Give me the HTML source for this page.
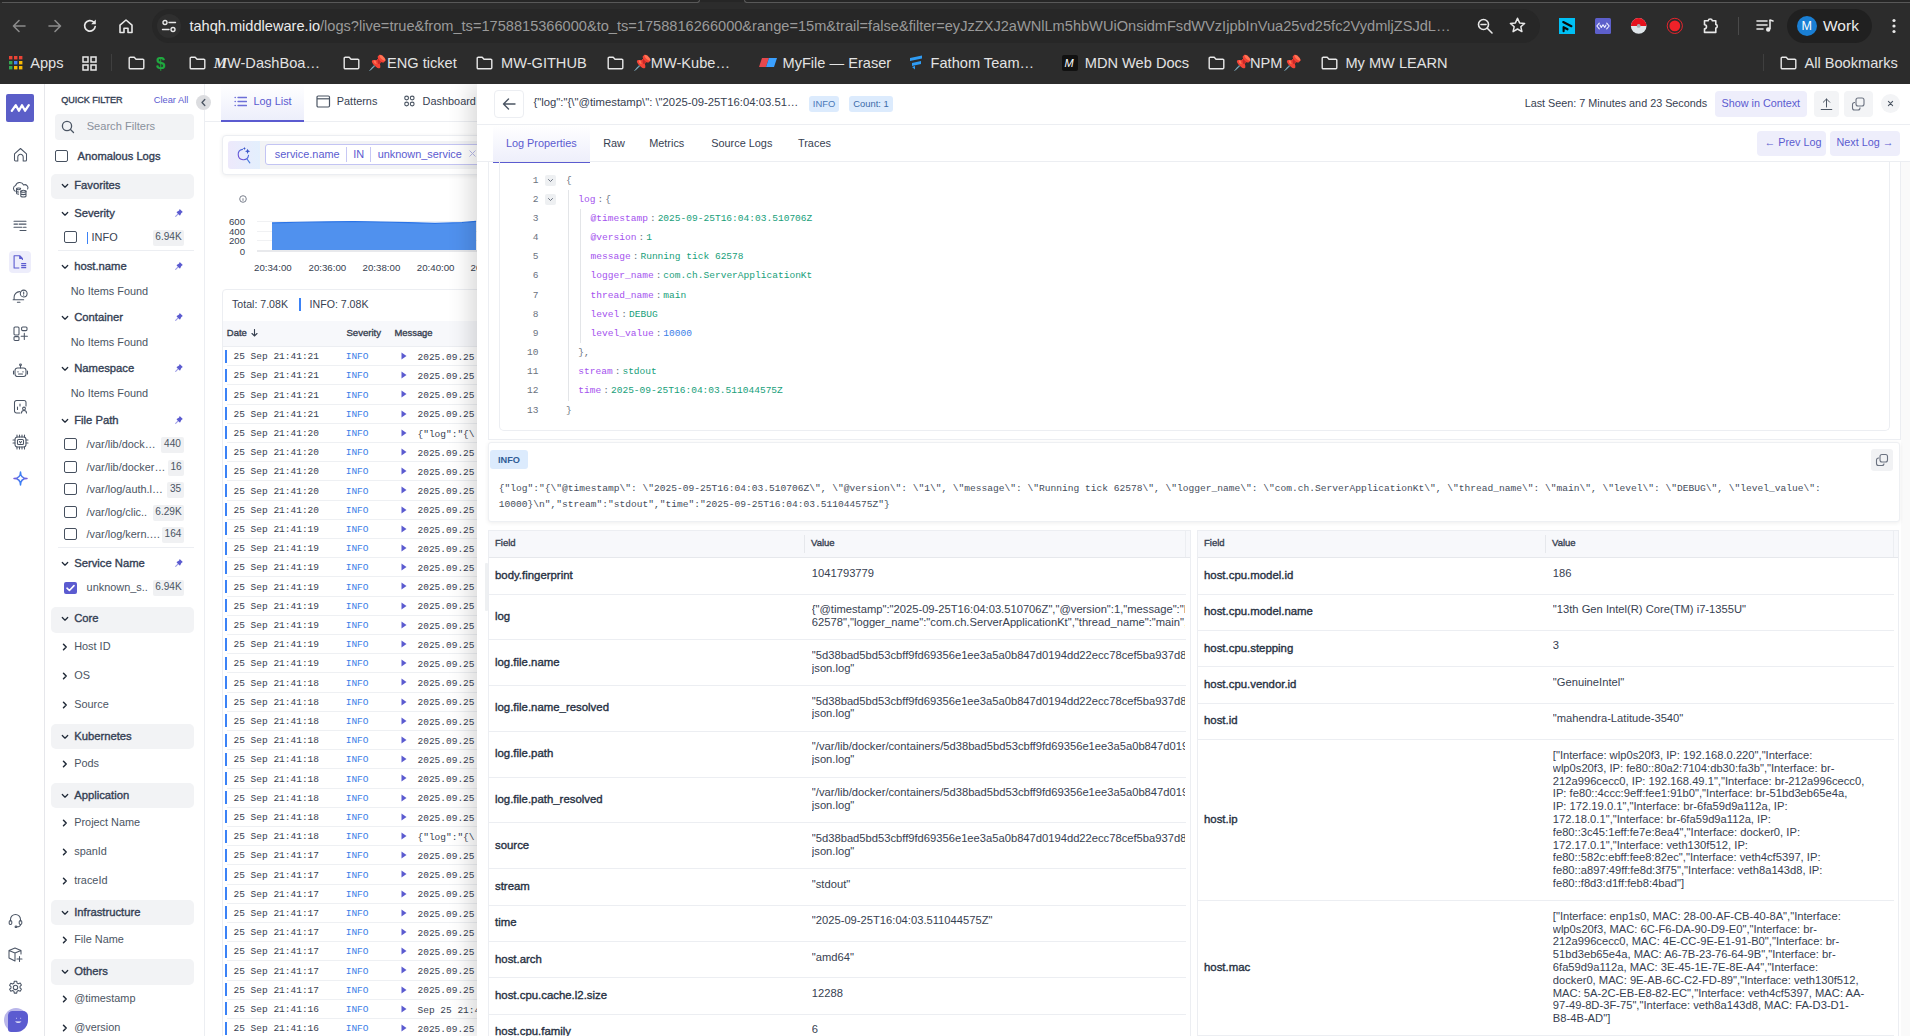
<!DOCTYPE html><html><head><meta charset="utf-8"><style>*{margin:0;padding:0}html,body{width:1910px;height:1036px;overflow:hidden;background:#fff}
body{position:relative;font-family:'Liberation Sans',sans-serif}
.a{position:absolute}.t{position:absolute;white-space:pre;line-height:1}</style></head><body><div class="a" style="left:0px;top:84px;width:44px;height:952px;background:#ffffff;"></div>
<div class="a" style="left:44px;top:84px;width:1px;height:952px;background:#e6e7eb;"></div>
<div class="a" style="left:6px;top:94px;width:28px;height:28px;background:#5b5ec8;border-radius:2px;"></div>
<svg class="a" style="left:8px;top:101px;" width="24" height="14" viewBox="0 0 24 14" fill="none"><path d="M3.8 9.9L7.8 4.2 10.9 9.7 14 4.2 17.1 9.7 20.8 4.2" stroke="#fff" stroke-width="2.3" stroke-linecap="round" stroke-linejoin="round"/></svg>
<svg class="a" style="left:13px;top:147px;" width="15" height="15" viewBox="0 0 15 15" fill="none"><path d="M1.5 6.8L7.5 1.5l6 5.3v6.2a1 1 0 0 1-1 1H10.2V10a2.7 2.7 0 0 0-5.4 0v4H2.5a1 1 0 0 1-1-1z" stroke="#4b5565" stroke-width="1.05" stroke-linecap="round" stroke-linejoin="round"/></svg>
<svg class="a" style="left:12px;top:182px;" width="17" height="16" viewBox="0 0 17 16" fill="none"><path d="M3.2 9.2A3 3 0 0 1 3.6 3.6 4.3 4.3 0 0 1 11.6 3 3 3 0 0 1 15.6 7" stroke="#4b5565" stroke-width="1.05" stroke-linecap="round" stroke-linejoin="round"/><ellipse cx="6.6" cy="6.8" rx="2.1" ry=".9" stroke="#4b5565" stroke-width="1.05" stroke-linecap="round" stroke-linejoin="round"/><path d="M4.5 6.8v4.4c0 .5.9.9 2.1.9M4.5 9c0 .5.9.9 2.1.9" stroke="#4b5565" stroke-width="1.05" stroke-linecap="round" stroke-linejoin="round"/><ellipse cx="11.4" cy="9.2" rx="2.6" ry="1" stroke="#4b5565" stroke-width="1.05" stroke-linecap="round" stroke-linejoin="round"/><path d="M8.8 9.2v4.8c0 .6 1.2 1 2.6 1s2.6-.4 2.6-1V9.2M8.8 11.6c0 .6 1.2 1 2.6 1s2.6-.4 2.6-1" stroke="#4b5565" stroke-width="1.05" stroke-linecap="round" stroke-linejoin="round"/></svg>
<svg class="a" style="left:12px;top:219px;" width="17" height="14" viewBox="0 0 17 14" fill="none"><path d="M2 2.3h12M2 5.1h3.5M7 5.1h7M2 8.3h8M11.5 8.3h2.6M8 11.4h6" stroke="#4b5565" stroke-width="1.05" stroke-linecap="round" stroke-linejoin="round"/></svg>
<div class="a" style="left:9px;top:251px;width:22px;height:22px;background:#ededfb;border-radius:4px;"></div>
<svg class="a" style="left:13px;top:255px;" width="14" height="14" viewBox="0 0 14 14" fill="none"><path d="M6.3 13H1.1V0.7h5.6l2.7 2.8v1.6M6.7 0.7v2.8h2.7" stroke="#5b5bd0" stroke-width="1.1" stroke-linejoin="round"/><path d="M8.2 8.6h5M8.2 10.6h5M8.2 12.6h5" stroke="#5b5bd0" stroke-width="1.1"/></svg>
<svg class="a" style="left:12px;top:288px;" width="17" height="17" viewBox="0 0 17 17" fill="none"><path d="M1.1 11.8h10.6M2.1 11.8V9.3A5.5 5.5 0 0 1 7.6 3.6" stroke="#4b5565" stroke-width="1.05" stroke-linecap="round" stroke-linejoin="round"/><circle cx="11.7" cy="5.5" r="3.4" stroke="#4b5565" stroke-width="1.05" stroke-linecap="round" stroke-linejoin="round"/><path d="M11.7 4v2M11.7 7.2v.1M5.4 14.3h2.6" stroke="#4b5565" stroke-width="1.05" stroke-linecap="round" stroke-linejoin="round"/></svg>
<svg class="a" style="left:13px;top:326px;" width="15" height="16" viewBox="0 0 15 16" fill="none"><rect x="1" y="1" width="5" height="8" rx="1" stroke="#4b5565" stroke-width="1.05" stroke-linecap="round" stroke-linejoin="round"/><rect x="1" y="10.6" width="5" height="3.8" rx="1" stroke="#4b5565" stroke-width="1.05" stroke-linecap="round" stroke-linejoin="round"/><rect x="8.6" y="1" width="5.4" height="3.6" rx="1" stroke="#4b5565" stroke-width="1.05" stroke-linecap="round" stroke-linejoin="round"/><path d="M11.3 7.2v6.2M8.2 10.3h6.2" stroke="#4b5565" stroke-width="1.05" stroke-linecap="round" stroke-linejoin="round"/></svg>
<svg class="a" style="left:12px;top:363px;" width="17" height="15" viewBox="0 0 17 15" fill="none"><rect x="3" y="5" width="11" height="8.5" rx="2.5" stroke="#4b5565" stroke-width="1.05" stroke-linecap="round" stroke-linejoin="round"/><path d="M8.5 5V2.5M1.5 8v3M15.5 8v3M6 8.5v.5M11 8.5v.5M6.5 11h4" stroke="#4b5565" stroke-width="1.05" stroke-linecap="round" stroke-linejoin="round"/><circle cx="8.5" cy="1.8" r=".9" stroke="#4b5565" stroke-width="1.05" stroke-linecap="round" stroke-linejoin="round"/></svg>
<svg class="a" style="left:13px;top:399px;" width="15" height="15" viewBox="0 0 15 15" fill="none"><path d="M7 14H3.5a2 2 0 0 1-2-2V3.5a2 2 0 0 1 2-2h7.5a2 2 0 0 1 2 2V7" stroke="#4b5565" stroke-width="1.05" stroke-linecap="round" stroke-linejoin="round"/><path d="M4.5 8v2.5M7 5v2" stroke="#4b5565" stroke-width="1.05" stroke-linecap="round" stroke-linejoin="round"/><circle cx="11" cy="9.5" r="1.4" stroke="#4b5565" stroke-width="1.05" stroke-linecap="round" stroke-linejoin="round"/><path d="M8.5 14a2.5 2.5 0 0 1 5 0" stroke="#4b5565" stroke-width="1.05" stroke-linecap="round" stroke-linejoin="round"/></svg>
<svg class="a" style="left:12px;top:434px;" width="17" height="16" viewBox="0 0 17 16" fill="none"><rect x="3" y="3" width="11" height="10" rx="2.5" stroke="#4b5565" stroke-width="1.05" stroke-linecap="round" stroke-linejoin="round"/><rect x="5.5" y="5.5" width="6" height="5" rx="1" stroke="#4b5565" stroke-width="1.05" stroke-linecap="round" stroke-linejoin="round"/><path d="M5 1v2M7.5 1v2M10 1v2M12.5 1v2M5 13v2M7.5 13v2M10 13v2M12.5 13v2M1 6h2M1 9h2M14 6h2M14 9h2M7.5 7.5l1 1.5 1-1.5" stroke="#4b5565" stroke-width="1.05" stroke-linecap="round" stroke-linejoin="round"/></svg>
<svg class="a" style="left:13px;top:471px;" width="15" height="15" viewBox="0 0 15 15" fill="none"><defs><linearGradient id="sg" x1="0" y1="0" x2="1" y2="0"><stop offset="0" stop-color="#7a5bd8"/><stop offset=".5" stop-color="#3b82f6"/><stop offset="1" stop-color="#7a5bd8"/></linearGradient></defs><path d="M7.5 1C7.5 5 5 7.5 1 7.5 5 7.5 7.5 10 7.5 14 7.5 10 10 7.5 14 7.5 10 7.5 7.5 5 7.5 1z" stroke="url(#sg)" stroke-width="1.5" stroke-linejoin="round"/></svg>
<svg class="a" style="left:8px;top:912px;" width="15" height="16" viewBox="0 0 15 16" fill="none"><path d="M2.5 9V7.5a5 5 0 0 1 10 0V9" stroke="#4b5565" stroke-width="1.05" stroke-linecap="round" stroke-linejoin="round"/><rect x="1.2" y="8.5" width="2.6" height="4" rx="1.3" stroke="#4b5565" stroke-width="1.05" stroke-linecap="round" stroke-linejoin="round"/><rect x="11.2" y="8.5" width="2.6" height="4" rx="1.3" stroke="#4b5565" stroke-width="1.05" stroke-linecap="round" stroke-linejoin="round"/><path d="M12.5 12.5c0 1.5-1.5 2.3-3.5 2.3" stroke="#4b5565" stroke-width="1.05" stroke-linecap="round" stroke-linejoin="round"/><circle cx="8" cy="14.8" r=".9" stroke="#4b5565" stroke-width="1.05" stroke-linecap="round" stroke-linejoin="round"/></svg>
<svg class="a" style="left:8px;top:947px;" width="15" height="15" viewBox="0 0 15 15" fill="none"><path d="M7 1L13 3.5V7M7 1L1 3.5v7.5l6 3M1 3.5L7 6l6-2.5M7 6v8" stroke="#4b5565" stroke-width="1.05" stroke-linecap="round" stroke-linejoin="round"/><path d="M11.5 9.5v5M9 12h5" stroke="#4b5565" stroke-width="1.05" stroke-linecap="round" stroke-linejoin="round"/></svg>
<svg class="a" style="left:8px;top:980px;" width="15" height="15" viewBox="0 0 15 15" fill="none"><path d="M6.3 1.2h2.4l.4 1.9 1.3.7 1.8-.7 1.2 2-1.4 1.3v1.5l1.4 1.3-1.2 2-1.8-.7-1.3.7-.4 1.9H6.3l-.4-1.9-1.3-.7-1.8.7-1.2-2L3 8.1V6.6L1.6 5.3l1.2-2 1.8.7 1.3-.7z" stroke="#4b5565" stroke-width="1.05" stroke-linecap="round" stroke-linejoin="round"/><circle cx="7.5" cy="7.4" r="2.2" stroke="#4b5565" stroke-width="1.05" stroke-linecap="round" stroke-linejoin="round"/></svg>
<div class="a" style="left:4px;top:1008px;width:24px;height:24px;background:#b9b6ea;border-radius:12px;"></div>
<svg class="a" style="left:4px;top:1008px;" width="24" height="24" viewBox="0 0 24 24" fill="none"><path d="M4 7.5A4.5 4.5 0 0 1 8.5 3H19a5 5 0 0 1 5 5v4a12 12 0 0 1-12 12H7a3 3 0 0 1-3-3z" fill="#5b5bd0"/><path d="M11 13.5c1.5 1.8 5 1.8 6.5 0z" fill="#fff"/><path d="M12 10.3h.8M16.3 10.3h.8" stroke="#dcdaf7" stroke-width="1"/></svg>
<div class="a" style="left:45px;top:84px;width:159px;height:952px;background:#ffffff;"></div>
<div class="a" style="left:204px;top:84px;width:1px;height:952px;background:#eceef2;"></div>
<div class="t" style="left:61.20px;top:95.86px;font-size:9.1px;-webkit-text-stroke:0.35px currentColor;color:#344054;letter-spacing:-0.05px;">QUICK FILTER</div>
<div class="t" style="left:153.70px;top:95.69px;font-size:9.3px;color:#5b5bd0;">Clear All</div>
<div class="a" style="left:55px;top:114px;width:139px;height:26px;background:#f2f3f5;border-radius:4px;"></div>
<svg class="a" style="left:61px;top:120px;" width="14" height="14" viewBox="0 0 14 14" fill="none"><circle cx="6" cy="6" r="4.6" stroke="#4b5563" stroke-width="1.3"/><path d="M9.5 9.5l3 3" stroke="#4b5563" stroke-width="1.3" stroke-linecap="round"/></svg>
<div class="t" style="left:86.70px;top:120.87px;font-size:11.1px;color:#8a919c;">Search Filters</div>
<div class="a" style="left:55px;top:150px;width:13px;height:12px;border:1.5px solid #46505f;border-radius:2px;box-sizing:border-box;"></div>
<div class="t" style="left:77.60px;top:150.82px;font-size:11.15px;-webkit-text-stroke:0.35px currentColor;color:#344054;">Anomalous Logs</div>
<div class="a" style="left:51px;top:174px;width:143px;height:25px;background:#f2f3f5;border-radius:5px;"></div>
<svg class="a" style="left:61px;top:182.5px;" width="8" height="6" viewBox="0 0 8 6" fill="none"><path d="M1.3 1.5l2.7 2.7 2.7-2.7" stroke="#1f2937" stroke-width="1.25" stroke-linecap="round" stroke-linejoin="round"/></svg>
<div class="t" style="left:74.20px;top:179.64px;font-size:11.25px;-webkit-text-stroke:0.35px currentColor;color:#344054;">Favorites</div>
<svg class="a" style="left:61px;top:210.8px;" width="8" height="6" viewBox="0 0 8 6" fill="none"><path d="M1.3 1.5l2.7 2.7 2.7-2.7" stroke="#1f2937" stroke-width="1.25" stroke-linecap="round" stroke-linejoin="round"/></svg>
<div class="t" style="left:74.20px;top:207.94px;font-size:11.25px;-webkit-text-stroke:0.35px currentColor;color:#344054;">Severity</div>
<svg class="a" style="left:175px;top:207.9px;" width="9" height="9" viewBox="0 0 9 9" fill="none"><path d="M4.7 1L7.8 4.1 6.4 4.9 5.1 7.4 4.3 7.3 1.8 4.8 1.7 4 4.1 2.6z" fill="#5b5bd0"/><path d="M2.7 6.3L.7 8.3" stroke="#9d9de6" stroke-width="1.1" stroke-linecap="round"/></svg>
<div class="a" style="left:64px;top:231px;width:13px;height:12px;border:1.5px solid #46505f;border-radius:2px;box-sizing:border-box;"></div>
<div class="a" style="left:87px;top:231.5px;width:1.2px;height:12px;background:#3b82f6;"></div>
<div class="t" style="left:91.60px;top:231.54px;font-size:10.9px;color:#374151;">INFO</div>
<div class="a" style="left:153px;top:230px;width:31px;height:16px;background:#f0f1f3;border-radius:2px;"></div>
<div class="t" style="left:153px;top:230.80px;width:31px;height:11px;line-height:11px;text-align:center;font-size:10.1px;color:#4b5563">6.94K</div>
<div class="a" style="left:58px;top:250px;width:136px;height:1px;background:#eceef2;"></div>
<svg class="a" style="left:61px;top:263.5px;" width="8" height="6" viewBox="0 0 8 6" fill="none"><path d="M1.3 1.5l2.7 2.7 2.7-2.7" stroke="#1f2937" stroke-width="1.25" stroke-linecap="round" stroke-linejoin="round"/></svg>
<div class="t" style="left:74.20px;top:260.64px;font-size:11.25px;-webkit-text-stroke:0.35px currentColor;color:#344054;">host.name</div>
<svg class="a" style="left:175px;top:260.6px;" width="9" height="9" viewBox="0 0 9 9" fill="none"><path d="M4.7 1L7.8 4.1 6.4 4.9 5.1 7.4 4.3 7.3 1.8 4.8 1.7 4 4.1 2.6z" fill="#5b5bd0"/><path d="M2.7 6.3L.7 8.3" stroke="#9d9de6" stroke-width="1.1" stroke-linecap="round"/></svg>
<div class="t" style="left:70.70px;top:285.84px;font-size:10.9px;color:#4b5563;">No Items Found</div>
<svg class="a" style="left:61px;top:314.5px;" width="8" height="6" viewBox="0 0 8 6" fill="none"><path d="M1.3 1.5l2.7 2.7 2.7-2.7" stroke="#1f2937" stroke-width="1.25" stroke-linecap="round" stroke-linejoin="round"/></svg>
<div class="t" style="left:74.20px;top:311.64px;font-size:11.25px;-webkit-text-stroke:0.35px currentColor;color:#344054;">Container</div>
<svg class="a" style="left:175px;top:311.6px;" width="9" height="9" viewBox="0 0 9 9" fill="none"><path d="M4.7 1L7.8 4.1 6.4 4.9 5.1 7.4 4.3 7.3 1.8 4.8 1.7 4 4.1 2.6z" fill="#5b5bd0"/><path d="M2.7 6.3L.7 8.3" stroke="#9d9de6" stroke-width="1.1" stroke-linecap="round"/></svg>
<div class="t" style="left:70.70px;top:336.94px;font-size:10.9px;color:#4b5563;">No Items Found</div>
<svg class="a" style="left:61px;top:366.1px;" width="8" height="6" viewBox="0 0 8 6" fill="none"><path d="M1.3 1.5l2.7 2.7 2.7-2.7" stroke="#1f2937" stroke-width="1.25" stroke-linecap="round" stroke-linejoin="round"/></svg>
<div class="t" style="left:74.20px;top:363.24px;font-size:11.25px;-webkit-text-stroke:0.35px currentColor;color:#344054;">Namespace</div>
<svg class="a" style="left:175px;top:363.20000000000005px;" width="9" height="9" viewBox="0 0 9 9" fill="none"><path d="M4.7 1L7.8 4.1 6.4 4.9 5.1 7.4 4.3 7.3 1.8 4.8 1.7 4 4.1 2.6z" fill="#5b5bd0"/><path d="M2.7 6.3L.7 8.3" stroke="#9d9de6" stroke-width="1.1" stroke-linecap="round"/></svg>
<div class="t" style="left:70.70px;top:387.94px;font-size:10.9px;color:#4b5563;">No Items Found</div>
<svg class="a" style="left:61px;top:417.6px;" width="8" height="6" viewBox="0 0 8 6" fill="none"><path d="M1.3 1.5l2.7 2.7 2.7-2.7" stroke="#1f2937" stroke-width="1.25" stroke-linecap="round" stroke-linejoin="round"/></svg>
<div class="t" style="left:74.20px;top:414.74px;font-size:11.25px;-webkit-text-stroke:0.35px currentColor;color:#344054;">File Path</div>
<svg class="a" style="left:175px;top:414.70000000000005px;" width="9" height="9" viewBox="0 0 9 9" fill="none"><path d="M4.7 1L7.8 4.1 6.4 4.9 5.1 7.4 4.3 7.3 1.8 4.8 1.7 4 4.1 2.6z" fill="#5b5bd0"/><path d="M2.7 6.3L.7 8.3" stroke="#9d9de6" stroke-width="1.1" stroke-linecap="round"/></svg>
<div class="a" style="left:64px;top:438px;width:13px;height:12px;border:1.5px solid #46505f;border-radius:2px;box-sizing:border-box;"></div>
<div class="t" style="left:86.60px;top:439.13px;font-size:10.9px;color:#4b5563;">/var/lib/dock…</div>
<div class="a" style="left:161px;top:437px;width:23px;height:16px;background:#f0f1f3;border-radius:2px;"></div>
<div class="t" style="left:161px;top:437.80px;width:23px;height:11px;line-height:11px;text-align:center;font-size:10.1px;color:#4b5563">440</div>
<div class="a" style="left:64px;top:461px;width:13px;height:12px;border:1.5px solid #46505f;border-radius:2px;box-sizing:border-box;"></div>
<div class="t" style="left:86.60px;top:461.69px;font-size:10.9px;color:#4b5563;">/var/lib/docker…</div>
<div class="a" style="left:168px;top:460px;width:16px;height:16px;background:#f0f1f3;border-radius:2px;"></div>
<div class="t" style="left:168px;top:460.80px;width:16px;height:11px;line-height:11px;text-align:center;font-size:10.1px;color:#4b5563">16</div>
<div class="a" style="left:64px;top:483px;width:13px;height:12px;border:1.5px solid #46505f;border-radius:2px;box-sizing:border-box;"></div>
<div class="t" style="left:86.60px;top:484.24px;font-size:10.9px;color:#4b5563;">/var/log/auth.l…</div>
<div class="a" style="left:167px;top:482px;width:17px;height:16px;background:#f0f1f3;border-radius:2px;"></div>
<div class="t" style="left:167px;top:482.80px;width:17px;height:11px;line-height:11px;text-align:center;font-size:10.1px;color:#4b5563">35</div>
<div class="a" style="left:64px;top:506px;width:13px;height:12px;border:1.5px solid #46505f;border-radius:2px;box-sizing:border-box;"></div>
<div class="t" style="left:86.60px;top:506.78px;font-size:10.9px;color:#4b5563;">/var/log/clic..</div>
<div class="a" style="left:153px;top:505px;width:31px;height:16px;background:#f0f1f3;border-radius:2px;"></div>
<div class="t" style="left:153px;top:505.80px;width:31px;height:11px;line-height:11px;text-align:center;font-size:10.1px;color:#4b5563">6.29K</div>
<div class="a" style="left:64px;top:528px;width:13px;height:12px;border:1.5px solid #46505f;border-radius:2px;box-sizing:border-box;"></div>
<div class="t" style="left:86.60px;top:529.34px;font-size:10.9px;color:#4b5563;">/var/log/kern.…</div>
<div class="a" style="left:162px;top:527px;width:22px;height:16px;background:#f0f1f3;border-radius:2px;"></div>
<div class="t" style="left:162px;top:527.80px;width:22px;height:11px;line-height:11px;text-align:center;font-size:10.1px;color:#4b5563">164</div>
<div class="a" style="left:58px;top:547px;width:136px;height:1px;background:#eceef2;"></div>
<svg class="a" style="left:61px;top:560.7px;" width="8" height="6" viewBox="0 0 8 6" fill="none"><path d="M1.3 1.5l2.7 2.7 2.7-2.7" stroke="#1f2937" stroke-width="1.25" stroke-linecap="round" stroke-linejoin="round"/></svg>
<div class="t" style="left:74.20px;top:557.84px;font-size:11.25px;-webkit-text-stroke:0.35px currentColor;color:#344054;">Service Name</div>
<svg class="a" style="left:175px;top:557.8000000000001px;" width="9" height="9" viewBox="0 0 9 9" fill="none"><path d="M4.7 1L7.8 4.1 6.4 4.9 5.1 7.4 4.3 7.3 1.8 4.8 1.7 4 4.1 2.6z" fill="#5b5bd0"/><path d="M2.7 6.3L.7 8.3" stroke="#9d9de6" stroke-width="1.1" stroke-linecap="round"/></svg>
<div class="a" style="left:64px;top:582px;width:13px;height:12px;background:#5b5bd0;border-radius:2px;"></div>
<svg class="a" style="left:64px;top:582px;" width="13" height="12" viewBox="0 0 13 12" fill="none"><path d="M3 6.2l2.4 2.3L10 3.6" stroke="#fff" stroke-width="1.6" stroke-linecap="round" stroke-linejoin="round"/></svg>
<div class="t" style="left:86.60px;top:582.13px;font-size:10.9px;color:#4b5563;">unknown_s..</div>
<div class="a" style="left:153px;top:580px;width:31px;height:16px;background:#f0f1f3;border-radius:2px;"></div>
<div class="t" style="left:153px;top:580.80px;width:31px;height:11px;line-height:11px;text-align:center;font-size:10.1px;color:#4b5563">6.94K</div>
<div class="a" style="left:51px;top:607px;width:143px;height:26px;background:#f2f3f5;border-radius:5px;"></div>
<svg class="a" style="left:61px;top:616.3px;" width="8" height="6" viewBox="0 0 8 6" fill="none"><path d="M1.3 1.5l2.7 2.7 2.7-2.7" stroke="#1f2937" stroke-width="1.25" stroke-linecap="round" stroke-linejoin="round"/></svg>
<div class="t" style="left:74.20px;top:613.44px;font-size:11.25px;-webkit-text-stroke:0.35px currentColor;color:#344054;">Core</div>
<svg class="a" style="left:62px;top:643px;" width="6" height="8" viewBox="0 0 6 8" fill="none"><path d="M1.5 1.3l2.7 2.7-2.7 2.7" stroke="#1f2937" stroke-width="1.5" stroke-linecap="round" stroke-linejoin="round"/></svg>
<div class="t" style="left:74.20px;top:640.74px;font-size:10.9px;color:#4b5563;">Host ID</div>
<svg class="a" style="left:62px;top:672px;" width="6" height="8" viewBox="0 0 6 8" fill="none"><path d="M1.5 1.3l2.7 2.7-2.7 2.7" stroke="#1f2937" stroke-width="1.5" stroke-linecap="round" stroke-linejoin="round"/></svg>
<div class="t" style="left:74.20px;top:669.74px;font-size:10.9px;color:#4b5563;">OS</div>
<svg class="a" style="left:62px;top:701px;" width="6" height="8" viewBox="0 0 6 8" fill="none"><path d="M1.5 1.3l2.7 2.7-2.7 2.7" stroke="#1f2937" stroke-width="1.5" stroke-linecap="round" stroke-linejoin="round"/></svg>
<div class="t" style="left:74.20px;top:698.74px;font-size:10.9px;color:#4b5563;">Source</div>
<div class="a" style="left:51px;top:724px;width:143px;height:25px;background:#f2f3f5;border-radius:5px;"></div>
<svg class="a" style="left:61px;top:733.7px;" width="8" height="6" viewBox="0 0 8 6" fill="none"><path d="M1.3 1.5l2.7 2.7 2.7-2.7" stroke="#1f2937" stroke-width="1.25" stroke-linecap="round" stroke-linejoin="round"/></svg>
<div class="t" style="left:74.20px;top:730.84px;font-size:11.25px;-webkit-text-stroke:0.35px currentColor;color:#344054;">Kubernetes</div>
<svg class="a" style="left:62px;top:760px;" width="6" height="8" viewBox="0 0 6 8" fill="none"><path d="M1.5 1.3l2.7 2.7-2.7 2.7" stroke="#1f2937" stroke-width="1.5" stroke-linecap="round" stroke-linejoin="round"/></svg>
<div class="t" style="left:74.20px;top:757.74px;font-size:10.9px;color:#4b5563;">Pods</div>
<div class="a" style="left:51px;top:783px;width:143px;height:25px;background:#f2f3f5;border-radius:5px;"></div>
<svg class="a" style="left:61px;top:792.5px;" width="8" height="6" viewBox="0 0 8 6" fill="none"><path d="M1.3 1.5l2.7 2.7 2.7-2.7" stroke="#1f2937" stroke-width="1.25" stroke-linecap="round" stroke-linejoin="round"/></svg>
<div class="t" style="left:74.20px;top:789.64px;font-size:11.25px;-webkit-text-stroke:0.35px currentColor;color:#344054;">Application</div>
<svg class="a" style="left:62px;top:819.4px;" width="6" height="8" viewBox="0 0 6 8" fill="none"><path d="M1.5 1.3l2.7 2.7-2.7 2.7" stroke="#1f2937" stroke-width="1.5" stroke-linecap="round" stroke-linejoin="round"/></svg>
<div class="t" style="left:74.20px;top:817.13px;font-size:10.9px;color:#4b5563;">Project Name</div>
<svg class="a" style="left:62px;top:848.4px;" width="6" height="8" viewBox="0 0 6 8" fill="none"><path d="M1.5 1.3l2.7 2.7-2.7 2.7" stroke="#1f2937" stroke-width="1.5" stroke-linecap="round" stroke-linejoin="round"/></svg>
<div class="t" style="left:74.20px;top:846.13px;font-size:10.9px;color:#4b5563;">spanId</div>
<svg class="a" style="left:62px;top:877.4px;" width="6" height="8" viewBox="0 0 6 8" fill="none"><path d="M1.5 1.3l2.7 2.7-2.7 2.7" stroke="#1f2937" stroke-width="1.5" stroke-linecap="round" stroke-linejoin="round"/></svg>
<div class="t" style="left:74.20px;top:875.13px;font-size:10.9px;color:#4b5563;">traceId</div>
<div class="a" style="left:51px;top:900px;width:143px;height:25px;background:#f2f3f5;border-radius:5px;"></div>
<svg class="a" style="left:61px;top:909.5px;" width="8" height="6" viewBox="0 0 8 6" fill="none"><path d="M1.3 1.5l2.7 2.7 2.7-2.7" stroke="#1f2937" stroke-width="1.25" stroke-linecap="round" stroke-linejoin="round"/></svg>
<div class="t" style="left:74.20px;top:906.64px;font-size:11.25px;-webkit-text-stroke:0.35px currentColor;color:#344054;">Infrastructure</div>
<svg class="a" style="left:62px;top:936px;" width="6" height="8" viewBox="0 0 6 8" fill="none"><path d="M1.5 1.3l2.7 2.7-2.7 2.7" stroke="#1f2937" stroke-width="1.5" stroke-linecap="round" stroke-linejoin="round"/></svg>
<div class="t" style="left:74.20px;top:933.74px;font-size:10.9px;color:#4b5563;">File Name</div>
<div class="a" style="left:51px;top:959px;width:143px;height:26px;background:#f2f3f5;border-radius:5px;"></div>
<svg class="a" style="left:61px;top:968.7px;" width="8" height="6" viewBox="0 0 8 6" fill="none"><path d="M1.3 1.5l2.7 2.7 2.7-2.7" stroke="#1f2937" stroke-width="1.25" stroke-linecap="round" stroke-linejoin="round"/></svg>
<div class="t" style="left:74.20px;top:965.84px;font-size:11.25px;-webkit-text-stroke:0.35px currentColor;color:#344054;">Others</div>
<svg class="a" style="left:62px;top:995.4px;" width="6" height="8" viewBox="0 0 6 8" fill="none"><path d="M1.5 1.3l2.7 2.7-2.7 2.7" stroke="#1f2937" stroke-width="1.5" stroke-linecap="round" stroke-linejoin="round"/></svg>
<div class="t" style="left:74.20px;top:993.13px;font-size:10.9px;color:#4b5563;">@timestamp</div>
<svg class="a" style="left:62px;top:1024px;" width="6" height="8" viewBox="0 0 6 8" fill="none"><path d="M1.5 1.3l2.7 2.7-2.7 2.7" stroke="#1f2937" stroke-width="1.5" stroke-linecap="round" stroke-linejoin="round"/></svg>
<div class="t" style="left:74.20px;top:1021.74px;font-size:10.9px;color:#4b5563;">@version</div>
<div class="a" style="left:205px;top:84px;width:272px;height:952px;background:#ffffff;"></div>
<div class="a" style="left:221px;top:84px;width:83px;height:37px;background:linear-gradient(#ffffff,#eceefb);"></div>
<div class="a" style="left:205px;top:121px;width:272px;height:1px;background:#eceef2;"></div>
<div class="a" style="left:221px;top:120px;width:83px;height:2px;background:#5b5bd0;"></div>
<svg class="a" style="left:234px;top:96px;" width="13" height="11" viewBox="0 0 13 11" fill="none"><path d="M4 1.5h8.5M4 5.5h8.5M4 9.5h8.5" stroke="#6d6fd8" stroke-width="1.3" stroke-linecap="round"/><circle cx="1.2" cy="1.5" r=".8" fill="#6d6fd8"/><circle cx="1.2" cy="5.5" r=".8" fill="#6d6fd8"/><circle cx="1.2" cy="9.5" r=".8" fill="#6d6fd8"/></svg>
<div class="t" style="left:253.50px;top:96.03px;font-size:10.9px;color:#5b5bd0;">Log List</div>
<svg class="a" style="left:316px;top:95px;" width="15" height="13" viewBox="0 0 15 13" fill="none"><rect x="1" y="1" width="12.5" height="11" rx="1.2" stroke="#4b5563" stroke-width="1.2"/><path d="M1 3.8h12.5" stroke="#4b5563" stroke-width="1.2"/></svg>
<div class="t" style="left:336.80px;top:96.03px;font-size:10.9px;color:#374151;">Patterns</div>
<svg class="a" style="left:404px;top:95px;" width="11" height="12" viewBox="0 0 11 12" fill="none"><circle cx="2.6" cy="3" r="1.9" stroke="#4b5563" stroke-width="1.1"/><circle cx="8.2" cy="3" r="1.9" stroke="#4b5563" stroke-width="1.1"/><circle cx="2.6" cy="9" r="1.9" stroke="#4b5563" stroke-width="1.1"/><circle cx="8.2" cy="9" r="1.9" stroke="#4b5563" stroke-width="1.1"/></svg>
<div class="t" style="left:422.60px;top:96.03px;font-size:10.9px;color:#374151;">Dashboard</div>
<div class="a" style="left:222px;top:135px;width:300px;height:40px;background:#fff;border:1px solid #eceef2;border-radius:4px;box-shadow:0 1px 4px rgba(0,0,0,.07);box-sizing:border-box;"></div>
<div class="a" style="left:228px;top:141px;width:32px;height:28px;background:linear-gradient(90deg,#ede9fb,#e3effd);border-radius:3px 0 0 3px;"></div>
<svg class="a" style="left:236px;top:145px;" width="18" height="20" viewBox="0 0 18 20" fill="none"><defs><linearGradient id="ag" x1="0" y1="1" x2="1" y2="0"><stop offset="0" stop-color="#7a4bd3"/><stop offset="1" stop-color="#3577e0"/></linearGradient></defs><path d="M12.52 10.4A5.2 5.2 0 1 1 6.5 4.38" stroke="url(#ag)" stroke-width="1.1" stroke-linecap="round"/><path d="M11 14l2.8 3.8" stroke="#4a7bdc" stroke-width="1.2" stroke-linecap="round"/><path d="M11.6 3.7Q11.9 6 14.2 6.3 11.9 6.6 11.6 8.9 11.3 6.6 9 6.3 11.3 6 11.6 3.7z" fill="#3b55c8"/><path d="M8.4 1.9Q8.6 3.2 9.9 3.4 8.6 3.6 8.4 4.9 8.2 3.6 6.9 3.4 8.2 3.2 8.4 1.9z" fill="#3b55c8"/></svg>
<div class="a" style="left:260px;top:141px;width:217px;height:28px;background:#f2f3f5;"></div>
<div class="a" style="left:265px;top:144px;width:260px;height:21px;background:#fff;border:1px solid #c3c4f3;border-radius:3px;box-sizing:border-box;"></div>
<div class="t" style="left:274.80px;top:148.94px;font-size:10.9px;color:#5b5bd0;">service.name</div>
<div class="a" style="left:346px;top:147px;width:1px;height:15px;background:#c7c8f4;"></div>
<div class="t" style="left:353.20px;top:148.94px;font-size:10.9px;color:#5b5bd0;">IN</div>
<div class="a" style="left:370px;top:147px;width:1px;height:15px;background:#c7c8f4;"></div>
<div class="t" style="left:377.70px;top:148.94px;font-size:10.9px;color:#5b5bd0;">unknown_service</div>
<svg class="a" style="left:468px;top:149px;" width="9" height="9" viewBox="0 0 9 9" fill="none"><path d="M1.5 1.5l6 6M7.5 1.5l-6 6" stroke="#b9bbe9" stroke-width="1"/></svg>
<svg class="a" style="left:239px;top:195px;" width="8" height="8" viewBox="0 0 8 8" fill="none"><circle cx="4" cy="4" r="3.3" stroke="#6b7280" stroke-width=".9"/><path d="M4 3.3v2.5" stroke="#6b7280" stroke-width=".9"/></svg>
<div class="t" style="left:205px;width:40px;text-align:right;top:216.70px;font-size:9.6px;line-height:10px;color:#374151">600</div>
<div class="t" style="left:205px;width:40px;text-align:right;top:226.80px;font-size:9.6px;line-height:10px;color:#374151">400</div>
<div class="t" style="left:205px;width:40px;text-align:right;top:235.80px;font-size:9.6px;line-height:10px;color:#374151">200</div>
<div class="t" style="left:205px;width:40px;text-align:right;top:246.70px;font-size:9.6px;line-height:10px;color:#374151">0</div>
<div class="a" style="left:257px;top:221px;width:220px;height:1px;background:#f0f1f3;"></div>
<div class="a" style="left:257px;top:231px;width:220px;height:1px;background:#f0f1f3;"></div>
<div class="a" style="left:257px;top:240px;width:220px;height:1px;background:#f0f1f3;"></div>
<div class="a" style="left:257px;top:250px;width:220px;height:2px;background:#e8e9ec;"></div>
<svg class="a" style="left:272px;top:220px;" width="204" height="31" viewBox="0 0 204 31" fill="none"><path d="M0 2.9 L27 2.3 L55 1.9 L82 1.5 L109 2.0 L136 2.6 L163 3.4 L190 2.5 L204 1.4 V30 H0z" fill="#5091ee"/><path d="M0 2.9 L27 2.3 L55 1.9 L82 1.5 L109 2.0 L136 2.6 L163 3.4 L190 2.5 L204 1.4" stroke="#2b74e6" stroke-width="1.1" fill="none"/></svg>
<div class="t" style="left:254.00px;top:262.75px;font-size:9.7px;color:#374151;">20:34:00</div>
<div class="t" style="left:308.50px;top:262.75px;font-size:9.7px;color:#374151;">20:36:00</div>
<div class="t" style="left:362.60px;top:262.75px;font-size:9.7px;color:#374151;">20:38:00</div>
<div class="t" style="left:416.80px;top:262.75px;font-size:9.7px;color:#374151;">20:40:00</div>
<div class="t" style="left:470.60px;top:262.75px;font-size:9.7px;color:#374151;">20:42:00</div>
<div class="a" style="left:222px;top:289px;width:300px;height:760px;background:#fff;border:1px solid #eceef2;border-radius:4px;box-sizing:border-box;"></div>
<div class="t" style="left:232.00px;top:298.89px;font-size:10.6px;color:#374151;">Total: 7.08K</div>
<div class="a" style="left:299px;top:298px;width:1.5px;height:13px;background:#3b82f6;"></div>
<div class="t" style="left:309.60px;top:298.89px;font-size:10.6px;color:#374151;">INFO: 7.08K</div>
<div class="a" style="left:223px;top:321px;width:254px;height:25px;background:#f7f8fb;"></div>
<div class="t" style="left:226.80px;top:327.93px;font-size:9.5px;-webkit-text-stroke:0.35px currentColor;color:#374151;">Date</div>
<svg class="a" style="left:250.5px;top:329px;" width="7" height="8" viewBox="0 0 7 8" fill="none"><path d="M3.5 .5v6.5M1 4.5l2.5 2.5L6 4.5" stroke="#374151" stroke-width="1.1" stroke-linecap="round"/></svg>
<div class="t" style="left:346.40px;top:327.84px;font-size:9.6px;-webkit-text-stroke:0.35px currentColor;color:#374151;">Severity</div>
<div class="t" style="left:394.50px;top:328.01px;font-size:9.4px;-webkit-text-stroke:0.35px currentColor;color:#374151;">Message</div>
<div class="a" style="left:223px;top:346px;width:254px;height:1px;background:#eceef2;"></div>
<div class="a" style="left:225px;top:350px;width:2px;height:13px;background:#3b82f6;"></div>
<div class="t" style="left:233.50px;top:352.18px;font-size:9.5px;color:#374151;font-family:'Liberation Mono',monospace;">25 Sep 21:41:21</div>
<div class="t" style="left:345.70px;top:352.18px;font-size:9.5px;color:#3b7ee8;font-family:'Liberation Mono',monospace;">INFO</div>
<svg class="a" style="left:401px;top:352px;" width="6" height="8" viewBox="0 0 6 8" fill="none"><path d="M.5 .5L5.5 4 .5 7.5z" fill="#5b5bd0"/></svg>
<div class="t" style="left:417.50px;top:352.88px;font-size:9.5px;color:#374151;font-family:'Liberation Mono',monospace;">2025.09.25 21:41</div>
<div class="a" style="left:227px;top:365px;width:250px;height:1px;background:#eef0f3;"></div>
<div class="a" style="left:225px;top:369px;width:2px;height:13px;background:#3b82f6;"></div>
<div class="t" style="left:233.50px;top:371.38px;font-size:9.5px;color:#374151;font-family:'Liberation Mono',monospace;">25 Sep 21:41:21</div>
<div class="t" style="left:345.70px;top:371.38px;font-size:9.5px;color:#3b7ee8;font-family:'Liberation Mono',monospace;">INFO</div>
<svg class="a" style="left:401px;top:371px;" width="6" height="8" viewBox="0 0 6 8" fill="none"><path d="M.5 .5L5.5 4 .5 7.5z" fill="#5b5bd0"/></svg>
<div class="t" style="left:417.50px;top:372.08px;font-size:9.5px;color:#374151;font-family:'Liberation Mono',monospace;">2025.09.25 21:41</div>
<div class="a" style="left:227px;top:384px;width:250px;height:1px;background:#eef0f3;"></div>
<div class="a" style="left:225px;top:388px;width:2px;height:13px;background:#3b82f6;"></div>
<div class="t" style="left:233.50px;top:390.58px;font-size:9.5px;color:#374151;font-family:'Liberation Mono',monospace;">25 Sep 21:41:21</div>
<div class="t" style="left:345.70px;top:390.58px;font-size:9.5px;color:#3b7ee8;font-family:'Liberation Mono',monospace;">INFO</div>
<svg class="a" style="left:401px;top:390px;" width="6" height="8" viewBox="0 0 6 8" fill="none"><path d="M.5 .5L5.5 4 .5 7.5z" fill="#5b5bd0"/></svg>
<div class="t" style="left:417.50px;top:391.28px;font-size:9.5px;color:#374151;font-family:'Liberation Mono',monospace;">2025.09.25 21:41</div>
<div class="a" style="left:227px;top:404px;width:250px;height:1px;background:#eef0f3;"></div>
<div class="a" style="left:225px;top:407px;width:2px;height:13px;background:#3b82f6;"></div>
<div class="t" style="left:233.50px;top:409.78px;font-size:9.5px;color:#374151;font-family:'Liberation Mono',monospace;">25 Sep 21:41:21</div>
<div class="t" style="left:345.70px;top:409.78px;font-size:9.5px;color:#3b7ee8;font-family:'Liberation Mono',monospace;">INFO</div>
<svg class="a" style="left:401px;top:410px;" width="6" height="8" viewBox="0 0 6 8" fill="none"><path d="M.5 .5L5.5 4 .5 7.5z" fill="#5b5bd0"/></svg>
<div class="t" style="left:417.50px;top:410.48px;font-size:9.5px;color:#374151;font-family:'Liberation Mono',monospace;">2025.09.25 21:41</div>
<div class="a" style="left:227px;top:423px;width:250px;height:1px;background:#eef0f3;"></div>
<div class="a" style="left:225px;top:426px;width:2px;height:13px;background:#3b82f6;"></div>
<div class="t" style="left:233.50px;top:428.98px;font-size:9.5px;color:#374151;font-family:'Liberation Mono',monospace;">25 Sep 21:41:20</div>
<div class="t" style="left:345.70px;top:428.98px;font-size:9.5px;color:#3b7ee8;font-family:'Liberation Mono',monospace;">INFO</div>
<svg class="a" style="left:401px;top:429px;" width="6" height="8" viewBox="0 0 6 8" fill="none"><path d="M.5 .5L5.5 4 .5 7.5z" fill="#5b5bd0"/></svg>
<div class="t" style="left:417.50px;top:429.68px;font-size:9.5px;color:#374151;font-family:'Liberation Mono',monospace;">{"log":"{\</div>
<div class="a" style="left:227px;top:442px;width:250px;height:1px;background:#eef0f3;"></div>
<div class="a" style="left:225px;top:446px;width:2px;height:13px;background:#3b82f6;"></div>
<div class="t" style="left:233.50px;top:448.18px;font-size:9.5px;color:#374151;font-family:'Liberation Mono',monospace;">25 Sep 21:41:20</div>
<div class="t" style="left:345.70px;top:448.18px;font-size:9.5px;color:#3b7ee8;font-family:'Liberation Mono',monospace;">INFO</div>
<svg class="a" style="left:401px;top:448px;" width="6" height="8" viewBox="0 0 6 8" fill="none"><path d="M.5 .5L5.5 4 .5 7.5z" fill="#5b5bd0"/></svg>
<div class="t" style="left:417.50px;top:448.88px;font-size:9.5px;color:#374151;font-family:'Liberation Mono',monospace;">2025.09.25 21:41</div>
<div class="a" style="left:227px;top:461px;width:250px;height:1px;background:#eef0f3;"></div>
<div class="a" style="left:225px;top:465px;width:2px;height:13px;background:#3b82f6;"></div>
<div class="t" style="left:233.50px;top:467.38px;font-size:9.5px;color:#374151;font-family:'Liberation Mono',monospace;">25 Sep 21:41:20</div>
<div class="t" style="left:345.70px;top:467.38px;font-size:9.5px;color:#3b7ee8;font-family:'Liberation Mono',monospace;">INFO</div>
<svg class="a" style="left:401px;top:467px;" width="6" height="8" viewBox="0 0 6 8" fill="none"><path d="M.5 .5L5.5 4 .5 7.5z" fill="#5b5bd0"/></svg>
<div class="t" style="left:417.50px;top:468.08px;font-size:9.5px;color:#374151;font-family:'Liberation Mono',monospace;">2025.09.25 21:41</div>
<div class="a" style="left:227px;top:480px;width:250px;height:1px;background:#eef0f3;"></div>
<div class="a" style="left:225px;top:484px;width:2px;height:13px;background:#3b82f6;"></div>
<div class="t" style="left:233.50px;top:486.58px;font-size:9.5px;color:#374151;font-family:'Liberation Mono',monospace;">25 Sep 21:41:20</div>
<div class="t" style="left:345.70px;top:486.58px;font-size:9.5px;color:#3b7ee8;font-family:'Liberation Mono',monospace;">INFO</div>
<svg class="a" style="left:401px;top:486px;" width="6" height="8" viewBox="0 0 6 8" fill="none"><path d="M.5 .5L5.5 4 .5 7.5z" fill="#5b5bd0"/></svg>
<div class="t" style="left:417.50px;top:487.28px;font-size:9.5px;color:#374151;font-family:'Liberation Mono',monospace;">2025.09.25 21:41</div>
<div class="a" style="left:227px;top:500px;width:250px;height:1px;background:#eef0f3;"></div>
<div class="a" style="left:225px;top:503px;width:2px;height:13px;background:#3b82f6;"></div>
<div class="t" style="left:233.50px;top:505.78px;font-size:9.5px;color:#374151;font-family:'Liberation Mono',monospace;">25 Sep 21:41:20</div>
<div class="t" style="left:345.70px;top:505.78px;font-size:9.5px;color:#3b7ee8;font-family:'Liberation Mono',monospace;">INFO</div>
<svg class="a" style="left:401px;top:506px;" width="6" height="8" viewBox="0 0 6 8" fill="none"><path d="M.5 .5L5.5 4 .5 7.5z" fill="#5b5bd0"/></svg>
<div class="t" style="left:417.50px;top:506.48px;font-size:9.5px;color:#374151;font-family:'Liberation Mono',monospace;">2025.09.25 21:41</div>
<div class="a" style="left:227px;top:519px;width:250px;height:1px;background:#eef0f3;"></div>
<div class="a" style="left:225px;top:522px;width:2px;height:13px;background:#3b82f6;"></div>
<div class="t" style="left:233.50px;top:524.98px;font-size:9.5px;color:#374151;font-family:'Liberation Mono',monospace;">25 Sep 21:41:19</div>
<div class="t" style="left:345.70px;top:524.98px;font-size:9.5px;color:#3b7ee8;font-family:'Liberation Mono',monospace;">INFO</div>
<svg class="a" style="left:401px;top:525px;" width="6" height="8" viewBox="0 0 6 8" fill="none"><path d="M.5 .5L5.5 4 .5 7.5z" fill="#5b5bd0"/></svg>
<div class="t" style="left:417.50px;top:525.68px;font-size:9.5px;color:#374151;font-family:'Liberation Mono',monospace;">2025.09.25 21:41</div>
<div class="a" style="left:227px;top:538px;width:250px;height:1px;background:#eef0f3;"></div>
<div class="a" style="left:225px;top:542px;width:2px;height:13px;background:#3b82f6;"></div>
<div class="t" style="left:233.50px;top:544.18px;font-size:9.5px;color:#374151;font-family:'Liberation Mono',monospace;">25 Sep 21:41:19</div>
<div class="t" style="left:345.70px;top:544.18px;font-size:9.5px;color:#3b7ee8;font-family:'Liberation Mono',monospace;">INFO</div>
<svg class="a" style="left:401px;top:544px;" width="6" height="8" viewBox="0 0 6 8" fill="none"><path d="M.5 .5L5.5 4 .5 7.5z" fill="#5b5bd0"/></svg>
<div class="t" style="left:417.50px;top:544.88px;font-size:9.5px;color:#374151;font-family:'Liberation Mono',monospace;">2025.09.25 21:41</div>
<div class="a" style="left:227px;top:557px;width:250px;height:1px;background:#eef0f3;"></div>
<div class="a" style="left:225px;top:561px;width:2px;height:13px;background:#3b82f6;"></div>
<div class="t" style="left:233.50px;top:563.38px;font-size:9.5px;color:#374151;font-family:'Liberation Mono',monospace;">25 Sep 21:41:19</div>
<div class="t" style="left:345.70px;top:563.38px;font-size:9.5px;color:#3b7ee8;font-family:'Liberation Mono',monospace;">INFO</div>
<svg class="a" style="left:401px;top:563px;" width="6" height="8" viewBox="0 0 6 8" fill="none"><path d="M.5 .5L5.5 4 .5 7.5z" fill="#5b5bd0"/></svg>
<div class="t" style="left:417.50px;top:564.08px;font-size:9.5px;color:#374151;font-family:'Liberation Mono',monospace;">2025.09.25 21:41</div>
<div class="a" style="left:227px;top:576px;width:250px;height:1px;background:#eef0f3;"></div>
<div class="a" style="left:225px;top:580px;width:2px;height:13px;background:#3b82f6;"></div>
<div class="t" style="left:233.50px;top:582.58px;font-size:9.5px;color:#374151;font-family:'Liberation Mono',monospace;">25 Sep 21:41:19</div>
<div class="t" style="left:345.70px;top:582.58px;font-size:9.5px;color:#3b7ee8;font-family:'Liberation Mono',monospace;">INFO</div>
<svg class="a" style="left:401px;top:582px;" width="6" height="8" viewBox="0 0 6 8" fill="none"><path d="M.5 .5L5.5 4 .5 7.5z" fill="#5b5bd0"/></svg>
<div class="t" style="left:417.50px;top:583.28px;font-size:9.5px;color:#374151;font-family:'Liberation Mono',monospace;">2025.09.25 21:41</div>
<div class="a" style="left:227px;top:596px;width:250px;height:1px;background:#eef0f3;"></div>
<div class="a" style="left:225px;top:599px;width:2px;height:13px;background:#3b82f6;"></div>
<div class="t" style="left:233.50px;top:601.78px;font-size:9.5px;color:#374151;font-family:'Liberation Mono',monospace;">25 Sep 21:41:19</div>
<div class="t" style="left:345.70px;top:601.78px;font-size:9.5px;color:#3b7ee8;font-family:'Liberation Mono',monospace;">INFO</div>
<svg class="a" style="left:401px;top:602px;" width="6" height="8" viewBox="0 0 6 8" fill="none"><path d="M.5 .5L5.5 4 .5 7.5z" fill="#5b5bd0"/></svg>
<div class="t" style="left:417.50px;top:602.48px;font-size:9.5px;color:#374151;font-family:'Liberation Mono',monospace;">2025.09.25 21:41</div>
<div class="a" style="left:227px;top:615px;width:250px;height:1px;background:#eef0f3;"></div>
<div class="a" style="left:225px;top:618px;width:2px;height:13px;background:#3b82f6;"></div>
<div class="t" style="left:233.50px;top:620.98px;font-size:9.5px;color:#374151;font-family:'Liberation Mono',monospace;">25 Sep 21:41:19</div>
<div class="t" style="left:345.70px;top:620.98px;font-size:9.5px;color:#3b7ee8;font-family:'Liberation Mono',monospace;">INFO</div>
<svg class="a" style="left:401px;top:621px;" width="6" height="8" viewBox="0 0 6 8" fill="none"><path d="M.5 .5L5.5 4 .5 7.5z" fill="#5b5bd0"/></svg>
<div class="t" style="left:417.50px;top:621.68px;font-size:9.5px;color:#374151;font-family:'Liberation Mono',monospace;">2025.09.25 21:41</div>
<div class="a" style="left:227px;top:634px;width:250px;height:1px;background:#eef0f3;"></div>
<div class="a" style="left:225px;top:638px;width:2px;height:13px;background:#3b82f6;"></div>
<div class="t" style="left:233.50px;top:640.18px;font-size:9.5px;color:#374151;font-family:'Liberation Mono',monospace;">25 Sep 21:41:19</div>
<div class="t" style="left:345.70px;top:640.18px;font-size:9.5px;color:#3b7ee8;font-family:'Liberation Mono',monospace;">INFO</div>
<svg class="a" style="left:401px;top:640px;" width="6" height="8" viewBox="0 0 6 8" fill="none"><path d="M.5 .5L5.5 4 .5 7.5z" fill="#5b5bd0"/></svg>
<div class="t" style="left:417.50px;top:640.88px;font-size:9.5px;color:#374151;font-family:'Liberation Mono',monospace;">2025.09.25 21:41</div>
<div class="a" style="left:227px;top:653px;width:250px;height:1px;background:#eef0f3;"></div>
<div class="a" style="left:225px;top:657px;width:2px;height:13px;background:#3b82f6;"></div>
<div class="t" style="left:233.50px;top:659.38px;font-size:9.5px;color:#374151;font-family:'Liberation Mono',monospace;">25 Sep 21:41:19</div>
<div class="t" style="left:345.70px;top:659.38px;font-size:9.5px;color:#3b7ee8;font-family:'Liberation Mono',monospace;">INFO</div>
<svg class="a" style="left:401px;top:659px;" width="6" height="8" viewBox="0 0 6 8" fill="none"><path d="M.5 .5L5.5 4 .5 7.5z" fill="#5b5bd0"/></svg>
<div class="t" style="left:417.50px;top:660.08px;font-size:9.5px;color:#374151;font-family:'Liberation Mono',monospace;">2025.09.25 21:41</div>
<div class="a" style="left:227px;top:672px;width:250px;height:1px;background:#eef0f3;"></div>
<div class="a" style="left:225px;top:676px;width:2px;height:13px;background:#3b82f6;"></div>
<div class="t" style="left:233.50px;top:678.58px;font-size:9.5px;color:#374151;font-family:'Liberation Mono',monospace;">25 Sep 21:41:18</div>
<div class="t" style="left:345.70px;top:678.58px;font-size:9.5px;color:#3b7ee8;font-family:'Liberation Mono',monospace;">INFO</div>
<svg class="a" style="left:401px;top:678px;" width="6" height="8" viewBox="0 0 6 8" fill="none"><path d="M.5 .5L5.5 4 .5 7.5z" fill="#5b5bd0"/></svg>
<div class="t" style="left:417.50px;top:679.28px;font-size:9.5px;color:#374151;font-family:'Liberation Mono',monospace;">2025.09.25 21:41</div>
<div class="a" style="left:227px;top:692px;width:250px;height:1px;background:#eef0f3;"></div>
<div class="a" style="left:225px;top:695px;width:2px;height:13px;background:#3b82f6;"></div>
<div class="t" style="left:233.50px;top:697.78px;font-size:9.5px;color:#374151;font-family:'Liberation Mono',monospace;">25 Sep 21:41:18</div>
<div class="t" style="left:345.70px;top:697.78px;font-size:9.5px;color:#3b7ee8;font-family:'Liberation Mono',monospace;">INFO</div>
<svg class="a" style="left:401px;top:698px;" width="6" height="8" viewBox="0 0 6 8" fill="none"><path d="M.5 .5L5.5 4 .5 7.5z" fill="#5b5bd0"/></svg>
<div class="t" style="left:417.50px;top:698.48px;font-size:9.5px;color:#374151;font-family:'Liberation Mono',monospace;">2025.09.25 21:41</div>
<div class="a" style="left:227px;top:711px;width:250px;height:1px;background:#eef0f3;"></div>
<div class="a" style="left:225px;top:714px;width:2px;height:13px;background:#3b82f6;"></div>
<div class="t" style="left:233.50px;top:716.98px;font-size:9.5px;color:#374151;font-family:'Liberation Mono',monospace;">25 Sep 21:41:18</div>
<div class="t" style="left:345.70px;top:716.98px;font-size:9.5px;color:#3b7ee8;font-family:'Liberation Mono',monospace;">INFO</div>
<svg class="a" style="left:401px;top:717px;" width="6" height="8" viewBox="0 0 6 8" fill="none"><path d="M.5 .5L5.5 4 .5 7.5z" fill="#5b5bd0"/></svg>
<div class="t" style="left:417.50px;top:717.68px;font-size:9.5px;color:#374151;font-family:'Liberation Mono',monospace;">2025.09.25 21:41</div>
<div class="a" style="left:227px;top:730px;width:250px;height:1px;background:#eef0f3;"></div>
<div class="a" style="left:225px;top:734px;width:2px;height:13px;background:#3b82f6;"></div>
<div class="t" style="left:233.50px;top:736.18px;font-size:9.5px;color:#374151;font-family:'Liberation Mono',monospace;">25 Sep 21:41:18</div>
<div class="t" style="left:345.70px;top:736.18px;font-size:9.5px;color:#3b7ee8;font-family:'Liberation Mono',monospace;">INFO</div>
<svg class="a" style="left:401px;top:736px;" width="6" height="8" viewBox="0 0 6 8" fill="none"><path d="M.5 .5L5.5 4 .5 7.5z" fill="#5b5bd0"/></svg>
<div class="t" style="left:417.50px;top:736.88px;font-size:9.5px;color:#374151;font-family:'Liberation Mono',monospace;">2025.09.25 21:41</div>
<div class="a" style="left:227px;top:749px;width:250px;height:1px;background:#eef0f3;"></div>
<div class="a" style="left:225px;top:753px;width:2px;height:13px;background:#3b82f6;"></div>
<div class="t" style="left:233.50px;top:755.38px;font-size:9.5px;color:#374151;font-family:'Liberation Mono',monospace;">25 Sep 21:41:18</div>
<div class="t" style="left:345.70px;top:755.38px;font-size:9.5px;color:#3b7ee8;font-family:'Liberation Mono',monospace;">INFO</div>
<svg class="a" style="left:401px;top:755px;" width="6" height="8" viewBox="0 0 6 8" fill="none"><path d="M.5 .5L5.5 4 .5 7.5z" fill="#5b5bd0"/></svg>
<div class="t" style="left:417.50px;top:756.08px;font-size:9.5px;color:#374151;font-family:'Liberation Mono',monospace;">2025.09.25 21:41</div>
<div class="a" style="left:227px;top:768px;width:250px;height:1px;background:#eef0f3;"></div>
<div class="a" style="left:225px;top:772px;width:2px;height:13px;background:#3b82f6;"></div>
<div class="t" style="left:233.50px;top:774.58px;font-size:9.5px;color:#374151;font-family:'Liberation Mono',monospace;">25 Sep 21:41:18</div>
<div class="t" style="left:345.70px;top:774.58px;font-size:9.5px;color:#3b7ee8;font-family:'Liberation Mono',monospace;">INFO</div>
<svg class="a" style="left:401px;top:774px;" width="6" height="8" viewBox="0 0 6 8" fill="none"><path d="M.5 .5L5.5 4 .5 7.5z" fill="#5b5bd0"/></svg>
<div class="t" style="left:417.50px;top:775.28px;font-size:9.5px;color:#374151;font-family:'Liberation Mono',monospace;">2025.09.25 21:41</div>
<div class="a" style="left:227px;top:788px;width:250px;height:1px;background:#eef0f3;"></div>
<div class="a" style="left:225px;top:791px;width:2px;height:13px;background:#3b82f6;"></div>
<div class="t" style="left:233.50px;top:793.78px;font-size:9.5px;color:#374151;font-family:'Liberation Mono',monospace;">25 Sep 21:41:18</div>
<div class="t" style="left:345.70px;top:793.78px;font-size:9.5px;color:#3b7ee8;font-family:'Liberation Mono',monospace;">INFO</div>
<svg class="a" style="left:401px;top:794px;" width="6" height="8" viewBox="0 0 6 8" fill="none"><path d="M.5 .5L5.5 4 .5 7.5z" fill="#5b5bd0"/></svg>
<div class="t" style="left:417.50px;top:794.48px;font-size:9.5px;color:#374151;font-family:'Liberation Mono',monospace;">2025.09.25 21:41</div>
<div class="a" style="left:227px;top:807px;width:250px;height:1px;background:#eef0f3;"></div>
<div class="a" style="left:225px;top:810px;width:2px;height:13px;background:#3b82f6;"></div>
<div class="t" style="left:233.50px;top:812.98px;font-size:9.5px;color:#374151;font-family:'Liberation Mono',monospace;">25 Sep 21:41:18</div>
<div class="t" style="left:345.70px;top:812.98px;font-size:9.5px;color:#3b7ee8;font-family:'Liberation Mono',monospace;">INFO</div>
<svg class="a" style="left:401px;top:813px;" width="6" height="8" viewBox="0 0 6 8" fill="none"><path d="M.5 .5L5.5 4 .5 7.5z" fill="#5b5bd0"/></svg>
<div class="t" style="left:417.50px;top:813.68px;font-size:9.5px;color:#374151;font-family:'Liberation Mono',monospace;">2025.09.25 21:41</div>
<div class="a" style="left:227px;top:826px;width:250px;height:1px;background:#eef0f3;"></div>
<div class="a" style="left:225px;top:830px;width:2px;height:13px;background:#3b82f6;"></div>
<div class="t" style="left:233.50px;top:832.18px;font-size:9.5px;color:#374151;font-family:'Liberation Mono',monospace;">25 Sep 21:41:18</div>
<div class="t" style="left:345.70px;top:832.18px;font-size:9.5px;color:#3b7ee8;font-family:'Liberation Mono',monospace;">INFO</div>
<svg class="a" style="left:401px;top:832px;" width="6" height="8" viewBox="0 0 6 8" fill="none"><path d="M.5 .5L5.5 4 .5 7.5z" fill="#5b5bd0"/></svg>
<div class="t" style="left:417.50px;top:832.88px;font-size:9.5px;color:#374151;font-family:'Liberation Mono',monospace;">{"log":"{\</div>
<div class="a" style="left:227px;top:845px;width:250px;height:1px;background:#eef0f3;"></div>
<div class="a" style="left:225px;top:849px;width:2px;height:13px;background:#3b82f6;"></div>
<div class="t" style="left:233.50px;top:851.38px;font-size:9.5px;color:#374151;font-family:'Liberation Mono',monospace;">25 Sep 21:41:17</div>
<div class="t" style="left:345.70px;top:851.38px;font-size:9.5px;color:#3b7ee8;font-family:'Liberation Mono',monospace;">INFO</div>
<svg class="a" style="left:401px;top:851px;" width="6" height="8" viewBox="0 0 6 8" fill="none"><path d="M.5 .5L5.5 4 .5 7.5z" fill="#5b5bd0"/></svg>
<div class="t" style="left:417.50px;top:852.08px;font-size:9.5px;color:#374151;font-family:'Liberation Mono',monospace;">2025.09.25 21:41</div>
<div class="a" style="left:227px;top:864px;width:250px;height:1px;background:#eef0f3;"></div>
<div class="a" style="left:225px;top:868px;width:2px;height:13px;background:#3b82f6;"></div>
<div class="t" style="left:233.50px;top:870.58px;font-size:9.5px;color:#374151;font-family:'Liberation Mono',monospace;">25 Sep 21:41:17</div>
<div class="t" style="left:345.70px;top:870.58px;font-size:9.5px;color:#3b7ee8;font-family:'Liberation Mono',monospace;">INFO</div>
<svg class="a" style="left:401px;top:870px;" width="6" height="8" viewBox="0 0 6 8" fill="none"><path d="M.5 .5L5.5 4 .5 7.5z" fill="#5b5bd0"/></svg>
<div class="t" style="left:417.50px;top:871.28px;font-size:9.5px;color:#374151;font-family:'Liberation Mono',monospace;">2025.09.25 21:41</div>
<div class="a" style="left:227px;top:884px;width:250px;height:1px;background:#eef0f3;"></div>
<div class="a" style="left:225px;top:887px;width:2px;height:13px;background:#3b82f6;"></div>
<div class="t" style="left:233.50px;top:889.78px;font-size:9.5px;color:#374151;font-family:'Liberation Mono',monospace;">25 Sep 21:41:17</div>
<div class="t" style="left:345.70px;top:889.78px;font-size:9.5px;color:#3b7ee8;font-family:'Liberation Mono',monospace;">INFO</div>
<svg class="a" style="left:401px;top:890px;" width="6" height="8" viewBox="0 0 6 8" fill="none"><path d="M.5 .5L5.5 4 .5 7.5z" fill="#5b5bd0"/></svg>
<div class="t" style="left:417.50px;top:890.48px;font-size:9.5px;color:#374151;font-family:'Liberation Mono',monospace;">2025.09.25 21:41</div>
<div class="a" style="left:227px;top:903px;width:250px;height:1px;background:#eef0f3;"></div>
<div class="a" style="left:225px;top:906px;width:2px;height:13px;background:#3b82f6;"></div>
<div class="t" style="left:233.50px;top:908.98px;font-size:9.5px;color:#374151;font-family:'Liberation Mono',monospace;">25 Sep 21:41:17</div>
<div class="t" style="left:345.70px;top:908.98px;font-size:9.5px;color:#3b7ee8;font-family:'Liberation Mono',monospace;">INFO</div>
<svg class="a" style="left:401px;top:909px;" width="6" height="8" viewBox="0 0 6 8" fill="none"><path d="M.5 .5L5.5 4 .5 7.5z" fill="#5b5bd0"/></svg>
<div class="t" style="left:417.50px;top:909.68px;font-size:9.5px;color:#374151;font-family:'Liberation Mono',monospace;">2025.09.25 21:41</div>
<div class="a" style="left:227px;top:922px;width:250px;height:1px;background:#eef0f3;"></div>
<div class="a" style="left:225px;top:926px;width:2px;height:13px;background:#3b82f6;"></div>
<div class="t" style="left:233.50px;top:928.18px;font-size:9.5px;color:#374151;font-family:'Liberation Mono',monospace;">25 Sep 21:41:17</div>
<div class="t" style="left:345.70px;top:928.18px;font-size:9.5px;color:#3b7ee8;font-family:'Liberation Mono',monospace;">INFO</div>
<svg class="a" style="left:401px;top:928px;" width="6" height="8" viewBox="0 0 6 8" fill="none"><path d="M.5 .5L5.5 4 .5 7.5z" fill="#5b5bd0"/></svg>
<div class="t" style="left:417.50px;top:928.88px;font-size:9.5px;color:#374151;font-family:'Liberation Mono',monospace;">2025.09.25 21:41</div>
<div class="a" style="left:227px;top:941px;width:250px;height:1px;background:#eef0f3;"></div>
<div class="a" style="left:225px;top:945px;width:2px;height:13px;background:#3b82f6;"></div>
<div class="t" style="left:233.50px;top:947.38px;font-size:9.5px;color:#374151;font-family:'Liberation Mono',monospace;">25 Sep 21:41:17</div>
<div class="t" style="left:345.70px;top:947.38px;font-size:9.5px;color:#3b7ee8;font-family:'Liberation Mono',monospace;">INFO</div>
<svg class="a" style="left:401px;top:947px;" width="6" height="8" viewBox="0 0 6 8" fill="none"><path d="M.5 .5L5.5 4 .5 7.5z" fill="#5b5bd0"/></svg>
<div class="t" style="left:417.50px;top:948.08px;font-size:9.5px;color:#374151;font-family:'Liberation Mono',monospace;">2025.09.25 21:41</div>
<div class="a" style="left:227px;top:960px;width:250px;height:1px;background:#eef0f3;"></div>
<div class="a" style="left:225px;top:964px;width:2px;height:13px;background:#3b82f6;"></div>
<div class="t" style="left:233.50px;top:966.58px;font-size:9.5px;color:#374151;font-family:'Liberation Mono',monospace;">25 Sep 21:41:17</div>
<div class="t" style="left:345.70px;top:966.58px;font-size:9.5px;color:#3b7ee8;font-family:'Liberation Mono',monospace;">INFO</div>
<svg class="a" style="left:401px;top:966px;" width="6" height="8" viewBox="0 0 6 8" fill="none"><path d="M.5 .5L5.5 4 .5 7.5z" fill="#5b5bd0"/></svg>
<div class="t" style="left:417.50px;top:967.28px;font-size:9.5px;color:#374151;font-family:'Liberation Mono',monospace;">2025.09.25 21:41</div>
<div class="a" style="left:227px;top:980px;width:250px;height:1px;background:#eef0f3;"></div>
<div class="a" style="left:225px;top:983px;width:2px;height:13px;background:#3b82f6;"></div>
<div class="t" style="left:233.50px;top:985.78px;font-size:9.5px;color:#374151;font-family:'Liberation Mono',monospace;">25 Sep 21:41:17</div>
<div class="t" style="left:345.70px;top:985.78px;font-size:9.5px;color:#3b7ee8;font-family:'Liberation Mono',monospace;">INFO</div>
<svg class="a" style="left:401px;top:986px;" width="6" height="8" viewBox="0 0 6 8" fill="none"><path d="M.5 .5L5.5 4 .5 7.5z" fill="#5b5bd0"/></svg>
<div class="t" style="left:417.50px;top:986.48px;font-size:9.5px;color:#374151;font-family:'Liberation Mono',monospace;">2025.09.25 21:41</div>
<div class="a" style="left:227px;top:999px;width:250px;height:1px;background:#eef0f3;"></div>
<div class="a" style="left:225px;top:1002px;width:2px;height:13px;background:#3b82f6;"></div>
<div class="t" style="left:233.50px;top:1004.98px;font-size:9.5px;color:#374151;font-family:'Liberation Mono',monospace;">25 Sep 21:41:16</div>
<div class="t" style="left:345.70px;top:1004.98px;font-size:9.5px;color:#3b7ee8;font-family:'Liberation Mono',monospace;">INFO</div>
<svg class="a" style="left:401px;top:1005px;" width="6" height="8" viewBox="0 0 6 8" fill="none"><path d="M.5 .5L5.5 4 .5 7.5z" fill="#5b5bd0"/></svg>
<div class="t" style="left:417.50px;top:1005.68px;font-size:9.5px;color:#374151;font-family:'Liberation Mono',monospace;">Sep 25 21:41</div>
<div class="a" style="left:227px;top:1018px;width:250px;height:1px;background:#eef0f3;"></div>
<div class="a" style="left:225px;top:1022px;width:2px;height:13px;background:#3b82f6;"></div>
<div class="t" style="left:233.50px;top:1024.18px;font-size:9.5px;color:#374151;font-family:'Liberation Mono',monospace;">25 Sep 21:41:16</div>
<div class="t" style="left:345.70px;top:1024.18px;font-size:9.5px;color:#3b7ee8;font-family:'Liberation Mono',monospace;">INFO</div>
<svg class="a" style="left:401px;top:1024px;" width="6" height="8" viewBox="0 0 6 8" fill="none"><path d="M.5 .5L5.5 4 .5 7.5z" fill="#5b5bd0"/></svg>
<div class="t" style="left:417.50px;top:1024.88px;font-size:9.5px;color:#374151;font-family:'Liberation Mono',monospace;">2025.09.25 21:41</div>
<div class="a" style="left:227px;top:1037px;width:250px;height:1px;background:#eef0f3;"></div>
<div class="a" style="left:196px;top:95px;width:15px;height:15px;background:#dcdde0;border-radius:8px;"></div>
<svg class="a" style="left:196px;top:95px;" width="15" height="15" viewBox="0 0 15 15" fill="none"><path d="M8.8 4.5L6 7.5l2.8 3" stroke="#4b5563" stroke-width="1.3" stroke-linecap="round" stroke-linejoin="round"/></svg>
<div class="a" style="left:477px;top:84px;width:1433px;height:952px;background:#ffffff;box-shadow:-6px 0 22px rgba(0,0,0,.16);"></div>
<div class="a" style="left:494px;top:90px;width:30px;height:28px;background:#fff;border:1px solid #eceef2;border-radius:4px;box-sizing:border-box;"></div>
<svg class="a" style="left:501px;top:96px;" width="16" height="16" viewBox="0 0 16 16" fill="none"><path d="M14 8H2.5M7.5 3L2.5 8l5 5" stroke="#4b5563" stroke-width="1.4" stroke-linecap="round" stroke-linejoin="round"/></svg>
<div class="t" style="left:533.50px;top:97.39px;font-size:11.3px;color:#374151;">{"log":"{\"@timestamp\": \"2025-09-25T16:04:03.51…</div>
<div class="a" style="left:809px;top:96px;width:30px;height:16px;background:#dcebfd;border-radius:3px;"></div>
<div class="t" style="left:809px;top:98px;width:30px;height:12px;line-height:12px;text-align:center;font-size:9.4px;color:#4a78b8">INFO</div>
<div class="a" style="left:849px;top:96px;width:44px;height:16px;background:#dcebfd;border-radius:3px;"></div>
<div class="t" style="left:849px;top:98px;width:44px;height:12px;line-height:12px;text-align:center;font-size:9.4px;color:#3a6aa8">Count: 1</div>
<div class="t" style="left:1524.70px;top:97.82px;font-size:10.8px;color:#374151;">Last Seen: 7 Minutes and 23 Seconds</div>
<div class="a" style="left:1715px;top:91px;width:92px;height:26px;background:#eeeefb;border-radius:4px;"></div>
<div class="t" style="left:1721.50px;top:98.32px;font-size:10.8px;color:#5b5bd0;">Show in Context</div>
<div class="a" style="left:1814px;top:91px;width:25px;height:26px;background:#f3f4f6;border-radius:4px;"></div>
<svg class="a" style="left:1819px;top:97px;" width="15" height="14" viewBox="0 0 15 14" fill="none"><path d="M7.5 10V2M4.3 5.2l3.2-3.2 3.2 3.2M2.2 12.5h10.6" stroke="#4b5563" stroke-width="1" stroke-linecap="round" stroke-linejoin="round"/></svg>
<div class="a" style="left:1844px;top:91px;width:29px;height:26px;background:#f3f4f6;border-radius:4px;"></div>
<svg class="a" style="left:1851px;top:97px;" width="15" height="14" viewBox="0 0 15 14" fill="none"><rect x="5" y="1" width="8" height="8" rx="2" stroke="#6b7280" stroke-width="1.1"/><path d="M9 10.5V11a2 2 0 0 1-2 2H3.5a2 2 0 0 1-2-2V7.5a2 2 0 0 1 2-2H4" stroke="#6b7280" stroke-width="1.1"/></svg>
<div class="a" style="left:1881px;top:94px;width:19px;height:19px;background:#f3f4f6;border-radius:10px;"></div>
<svg class="a" style="left:1886px;top:99px;" width="9" height="9" viewBox="0 0 9 9" fill="none"><path d="M2.4 2.4l4.2 4.2M6.6 2.4L2.4 6.6" stroke="#4b5563" stroke-width="1.1" stroke-linecap="round"/></svg>
<div class="a" style="left:477px;top:124px;width:1433px;height:1px;background:#eceef2;"></div>
<div class="a" style="left:493px;top:125px;width:97px;height:36px;background:linear-gradient(#ffffff,#eeeffb);"></div>
<div class="a" style="left:493px;top:160.6px;width:97px;height:2px;background:#5b5bd0;"></div>
<div class="t" style="left:505.90px;top:137.74px;font-size:10.9px;color:#5b5bd0;">Log Properties</div>
<div class="t" style="left:603.20px;top:137.74px;font-size:10.9px;color:#374151;">Raw</div>
<div class="t" style="left:649.20px;top:137.74px;font-size:10.9px;color:#374151;">Metrics</div>
<div class="t" style="left:711.20px;top:137.74px;font-size:10.9px;color:#374151;">Source Logs</div>
<div class="t" style="left:798.00px;top:137.74px;font-size:10.9px;color:#374151;">Traces</div>
<div class="a" style="left:1757px;top:131px;width:69px;height:25px;background:#eeeefb;border-radius:4px;"></div>
<div class="t" style="left:1764.50px;top:136.82px;font-size:10.8px;color:#5b5bd0;">← Prev Log</div>
<div class="a" style="left:1830px;top:131px;width:70px;height:25px;background:#eeeefb;border-radius:4px;"></div>
<div class="t" style="left:1836.50px;top:136.82px;font-size:10.8px;color:#5b5bd0;">Next Log →</div>
<div class="a" style="left:477px;top:161px;width:1433px;height:1px;background:#eceef2;"></div>
<div class="a" style="left:1901px;top:162px;width:9px;height:874px;background:#fafafa;"></div>
<div class="a" style="left:488px;top:162px;width:1413px;height:278px;border:1px solid #eceef2;border-top:none;box-sizing:border-box;"></div>
<div class="a" style="left:499px;top:162px;width:1391px;height:269px;border:1px solid #eceef2;border-top:none;border-radius:0 0 5px 5px;box-sizing:border-box;"></div>
<div class="t" style="left:500px;width:38.5px;text-align:right;top:175.54px;font-size:9.55px;font-family:'Liberation Mono',monospace;color:#6b7280">1</div>
<div class="t" style="left:566.00px;top:175.54px;font-size:9.55px;font-family:'Liberation Mono',monospace;"><span style="color:#6b7280">{</span></div>
<div class="t" style="left:500px;width:38.5px;text-align:right;top:194.71px;font-size:9.55px;font-family:'Liberation Mono',monospace;color:#6b7280">2</div>
<div class="t" style="left:578.30px;top:194.71px;font-size:9.55px;font-family:'Liberation Mono',monospace;"><span style="color:#a452ee">log</span><span style="color:#6b7280;margin:0 2px">:</span><span style="color:#6b7280">{</span></div>
<div class="t" style="left:500px;width:38.5px;text-align:right;top:213.88px;font-size:9.55px;font-family:'Liberation Mono',monospace;color:#6b7280">3</div>
<div class="t" style="left:590.60px;top:213.88px;font-size:9.55px;font-family:'Liberation Mono',monospace;"><span style="color:#a452ee">@timestamp</span><span style="color:#6b7280;margin:0 2px">:</span><span style="color:#18a07a">2025-09-25T16:04:03.510706Z</span></div>
<div class="t" style="left:500px;width:38.5px;text-align:right;top:233.05px;font-size:9.55px;font-family:'Liberation Mono',monospace;color:#6b7280">4</div>
<div class="t" style="left:590.60px;top:233.05px;font-size:9.55px;font-family:'Liberation Mono',monospace;"><span style="color:#a452ee">@version</span><span style="color:#6b7280;margin:0 2px">:</span><span style="color:#18a07a">1</span></div>
<div class="t" style="left:500px;width:38.5px;text-align:right;top:252.22px;font-size:9.55px;font-family:'Liberation Mono',monospace;color:#6b7280">5</div>
<div class="t" style="left:590.60px;top:252.22px;font-size:9.55px;font-family:'Liberation Mono',monospace;"><span style="color:#a452ee">message</span><span style="color:#6b7280;margin:0 2px">:</span><span style="color:#18a07a">Running tick 62578</span></div>
<div class="t" style="left:500px;width:38.5px;text-align:right;top:271.39px;font-size:9.55px;font-family:'Liberation Mono',monospace;color:#6b7280">6</div>
<div class="t" style="left:590.60px;top:271.39px;font-size:9.55px;font-family:'Liberation Mono',monospace;"><span style="color:#a452ee">logger_name</span><span style="color:#6b7280;margin:0 2px">:</span><span style="color:#18a07a">com.ch.ServerApplicationKt</span></div>
<div class="t" style="left:500px;width:38.5px;text-align:right;top:290.56px;font-size:9.55px;font-family:'Liberation Mono',monospace;color:#6b7280">7</div>
<div class="t" style="left:590.60px;top:290.56px;font-size:9.55px;font-family:'Liberation Mono',monospace;"><span style="color:#a452ee">thread_name</span><span style="color:#6b7280;margin:0 2px">:</span><span style="color:#18a07a">main</span></div>
<div class="t" style="left:500px;width:38.5px;text-align:right;top:309.73px;font-size:9.55px;font-family:'Liberation Mono',monospace;color:#6b7280">8</div>
<div class="t" style="left:590.60px;top:309.73px;font-size:9.55px;font-family:'Liberation Mono',monospace;"><span style="color:#a452ee">level</span><span style="color:#6b7280;margin:0 2px">:</span><span style="color:#18a07a">DEBUG</span></div>
<div class="t" style="left:500px;width:38.5px;text-align:right;top:328.90px;font-size:9.55px;font-family:'Liberation Mono',monospace;color:#6b7280">9</div>
<div class="t" style="left:590.60px;top:328.90px;font-size:9.55px;font-family:'Liberation Mono',monospace;"><span style="color:#a452ee">level_value</span><span style="color:#6b7280;margin:0 2px">:</span><span style="color:#3b7ee8">10000</span></div>
<div class="t" style="left:500px;width:38.5px;text-align:right;top:348.07px;font-size:9.55px;font-family:'Liberation Mono',monospace;color:#6b7280">10</div>
<div class="t" style="left:578.30px;top:348.07px;font-size:9.55px;font-family:'Liberation Mono',monospace;"><span style="color:#6b7280">},</span></div>
<div class="t" style="left:500px;width:38.5px;text-align:right;top:367.24px;font-size:9.55px;font-family:'Liberation Mono',monospace;color:#6b7280">11</div>
<div class="t" style="left:578.30px;top:367.24px;font-size:9.55px;font-family:'Liberation Mono',monospace;"><span style="color:#a452ee">stream</span><span style="color:#6b7280;margin:0 2px">:</span><span style="color:#18a07a">stdout</span></div>
<div class="t" style="left:500px;width:38.5px;text-align:right;top:386.41px;font-size:9.55px;font-family:'Liberation Mono',monospace;color:#6b7280">12</div>
<div class="t" style="left:578.30px;top:386.41px;font-size:9.55px;font-family:'Liberation Mono',monospace;"><span style="color:#a452ee">time</span><span style="color:#6b7280;margin:0 2px">:</span><span style="color:#18a07a">2025-09-25T16:04:03.511044575Z</span></div>
<div class="t" style="left:500px;width:38.5px;text-align:right;top:405.58px;font-size:9.55px;font-family:'Liberation Mono',monospace;color:#6b7280">13</div>
<div class="t" style="left:566.00px;top:405.58px;font-size:9.55px;font-family:'Liberation Mono',monospace;"><span style="color:#6b7280">}</span></div>
<div class="a" style="left:545px;top:175px;width:11px;height:11px;background:#eef0f2;border-radius:2px;"></div>
<svg class="a" style="left:545px;top:175px;" width="11" height="11" viewBox="0 0 11 11" fill="none"><path d="M3.5 4.5l2 2 2-2" stroke="#6b7280" stroke-width="1" stroke-linecap="round"/></svg>
<div class="a" style="left:545px;top:194px;width:11px;height:11px;background:#eef0f2;border-radius:2px;"></div>
<svg class="a" style="left:545px;top:194px;" width="11" height="11" viewBox="0 0 11 11" fill="none"><path d="M3.5 4.5l2 2 2-2" stroke="#6b7280" stroke-width="1" stroke-linecap="round"/></svg>
<div class="a" style="left:568px;top:190px;width:1px;height:211px;background:#e3e5e8;"></div>
<div class="a" style="left:580px;top:209px;width:1px;height:134px;background:#e3e5e8;"></div>
<div class="a" style="left:488px;top:442px;width:1412px;height:80px;background:#fff;border:1px solid #eef0f3;border-radius:3px;box-shadow:0 1px 4px rgba(0,0,0,.07);box-sizing:border-box;"></div>
<div class="a" style="left:490px;top:450px;width:38px;height:19px;background:#dcebfd;border-radius:3px;"></div>
<div class="t" style="left:490px;top:453.5px;width:38px;height:12px;line-height:12px;text-align:center;font-size:9.2px;font-weight:700;color:#2f5c96">INFO</div>
<div class="a" style="left:1871px;top:449px;width:22px;height:22px;background:#f1f2f4;border-radius:3px;"></div>
<svg class="a" style="left:1874px;top:452px;" width="16" height="16" viewBox="0 0 16 16" fill="none"><rect x="6" y="2.5" width="7.5" height="7.5" rx="2" stroke="#6b7280" stroke-width="1.1"/><path d="M10 11.5a2 2 0 0 1-2 2H4.5a2 2 0 0 1-2-2V8a2 2 0 0 1 2-2H5" stroke="#6b7280" stroke-width="1.1"/></svg>
<div class="t" style="left:498.80px;top:483.91px;font-size:9.595px;color:#454d5b;font-family:'Liberation Mono',monospace;">{"log":"{\"@timestamp\": \"2025-09-25T16:04:03.510706Z\", \"@version\": \"1\", \"message\": \"Running tick 62578\", \"logger_name\": \"com.ch.ServerApplicationKt\", \"thread_name\": \"main\", \"level\": \"DEBUG\", \"level_value\":</div>
<div class="t" style="left:498.80px;top:499.81px;font-size:9.595px;color:#454d5b;font-family:'Liberation Mono',monospace;">10000}\n","stream":"stdout","time":"2025-09-25T16:04:03.511044575Z"}</div>
<div class="a" style="left:485px;top:563px;width:3px;height:48px;background:#eef0f2;border-radius:1px;"></div>
<div class="a" style="left:488px;top:530px;width:703px;height:506px;background:#fff;border:1px solid #eceef2;border-bottom:none;box-sizing:border-box;"></div>
<div class="a" style="left:489px;top:531px;width:701px;height:26px;background:#f7f8fb;"></div>
<div class="a" style="left:489px;top:557px;width:701px;height:1px;background:#e6e8ec;"></div>
<div class="a" style="left:804px;top:535px;width:1px;height:18px;background:#e6e8ec;"></div>
<div class="a" style="left:1185px;top:531px;width:1px;height:26px;background:#eceef2;"></div>
<div class="t" style="left:495.00px;top:538.12px;font-size:9.5px;-webkit-text-stroke:0.35px currentColor;color:#374151;">Field</div>
<div class="t" style="left:811.00px;top:538.12px;font-size:9.5px;-webkit-text-stroke:0.35px currentColor;color:#374151;">Value</div>
<div class="t" style="left:495.00px;top:570.11px;font-size:11.4px;-webkit-text-stroke:0.35px currentColor;color:#263042;">body.fingerprint</div>
<div class="a" style="left:811.8px;top:0;width:373.20000000000005px;height:1036px;overflow:hidden"><div class="t" style="left:0;top:568.27px;font-size:11.2px;color:#374151">1041793779</div></div>
<div class="a" style="left:489px;top:594px;width:697px;height:1px;background:#eceef2;"></div>
<div class="t" style="left:495.00px;top:610.91px;font-size:11.4px;-webkit-text-stroke:0.35px currentColor;color:#263042;">log</div>
<div class="a" style="left:811.8px;top:0;width:373.20000000000005px;height:1036px;overflow:hidden"><div class="t" style="left:0;top:604.07px;font-size:11.2px;color:#374151">{"@timestamp":"2025-09-25T16:04:03.510706Z","@version":1,"message":"Running tick</div><div class="t" style="left:0;top:617.17px;font-size:11.2px;color:#374151">62578","logger_name":"com.ch.ServerApplicationKt","thread_name":"main","level":"DEBUG","level_value":10000}"</div></div>
<div class="a" style="left:489px;top:639px;width:697px;height:1px;background:#eceef2;"></div>
<div class="t" style="left:495.00px;top:656.91px;font-size:11.4px;-webkit-text-stroke:0.35px currentColor;color:#263042;">log.file.name</div>
<div class="a" style="left:811.8px;top:0;width:373.20000000000005px;height:1036px;overflow:hidden"><div class="t" style="left:0;top:650.37px;font-size:11.2px;color:#374151">"5d38bad5bd53cbff9fd69356e1ee3a5a0b847d0194dd22ecc78cef5ba937d8c3-</div><div class="t" style="left:0;top:663.17px;font-size:11.2px;color:#374151">json.log"</div></div>
<div class="a" style="left:489px;top:685px;width:697px;height:1px;background:#eceef2;"></div>
<div class="t" style="left:495.00px;top:702.11px;font-size:11.4px;-webkit-text-stroke:0.35px currentColor;color:#263042;">log.file.name_resolved</div>
<div class="a" style="left:811.8px;top:0;width:373.20000000000005px;height:1036px;overflow:hidden"><div class="t" style="left:0;top:695.87px;font-size:11.2px;color:#374151">"5d38bad5bd53cbff9fd69356e1ee3a5a0b847d0194dd22ecc78cef5ba937d8c3-</div><div class="t" style="left:0;top:708.37px;font-size:11.2px;color:#374151">json.log"</div></div>
<div class="a" style="left:489px;top:731px;width:697px;height:1px;background:#eceef2;"></div>
<div class="t" style="left:495.00px;top:748.11px;font-size:11.4px;-webkit-text-stroke:0.35px currentColor;color:#263042;">log.file.path</div>
<div class="a" style="left:811.8px;top:0;width:373.20000000000005px;height:1036px;overflow:hidden"><div class="t" style="left:0;top:741.27px;font-size:11.2px;color:#374151">"/var/lib/docker/containers/5d38bad5bd53cbff9fd69356e1ee3a5a0b847d0194dd22ecc78cef5ba937d8c3/5d38bad5bd53cbff9fd69356e1ee3a5a0b847d0194dd22ecc78cef5ba937d8c3-</div><div class="t" style="left:0;top:754.07px;font-size:11.2px;color:#374151">json.log"</div></div>
<div class="a" style="left:489px;top:777px;width:697px;height:1px;background:#eceef2;"></div>
<div class="t" style="left:495.00px;top:793.71px;font-size:11.4px;-webkit-text-stroke:0.35px currentColor;color:#263042;">log.file.path_resolved</div>
<div class="a" style="left:811.8px;top:0;width:373.20000000000005px;height:1036px;overflow:hidden"><div class="t" style="left:0;top:786.87px;font-size:11.2px;color:#374151">"/var/lib/docker/containers/5d38bad5bd53cbff9fd69356e1ee3a5a0b847d0194dd22ecc78cef5ba937d8c3/5d38bad5bd53cbff9fd69356e1ee3a5a0b847d0194dd22ecc78cef5ba937d8c3-</div><div class="t" style="left:0;top:800.17px;font-size:11.2px;color:#374151">json.log"</div></div>
<div class="a" style="left:489px;top:822px;width:697px;height:1px;background:#eceef2;"></div>
<div class="t" style="left:495.00px;top:839.71px;font-size:11.4px;-webkit-text-stroke:0.35px currentColor;color:#263042;">source</div>
<div class="a" style="left:811.8px;top:0;width:373.20000000000005px;height:1036px;overflow:hidden"><div class="t" style="left:0;top:833.17px;font-size:11.2px;color:#374151">"5d38bad5bd53cbff9fd69356e1ee3a5a0b847d0194dd22ecc78cef5ba937d8c3-</div><div class="t" style="left:0;top:845.87px;font-size:11.2px;color:#374151">json.log"</div></div>
<div class="a" style="left:489px;top:868px;width:697px;height:1px;background:#eceef2;"></div>
<div class="t" style="left:495.00px;top:880.91px;font-size:11.4px;-webkit-text-stroke:0.35px currentColor;color:#263042;">stream</div>
<div class="a" style="left:811.8px;top:0;width:373.20000000000005px;height:1036px;overflow:hidden"><div class="t" style="left:0;top:878.97px;font-size:11.2px;color:#374151">"stdout"</div></div>
<div class="a" style="left:489px;top:905px;width:697px;height:1px;background:#eceef2;"></div>
<div class="t" style="left:495.00px;top:916.91px;font-size:11.4px;-webkit-text-stroke:0.35px currentColor;color:#263042;">time</div>
<div class="a" style="left:811.8px;top:0;width:373.20000000000005px;height:1036px;overflow:hidden"><div class="t" style="left:0;top:915.17px;font-size:11.2px;color:#374151">"2025-09-25T16:04:03.511044575Z"</div></div>
<div class="a" style="left:489px;top:941px;width:697px;height:1px;background:#eceef2;"></div>
<div class="t" style="left:495.00px;top:953.91px;font-size:11.4px;-webkit-text-stroke:0.35px currentColor;color:#263042;">host.arch</div>
<div class="a" style="left:811.8px;top:0;width:373.20000000000005px;height:1036px;overflow:hidden"><div class="t" style="left:0;top:951.97px;font-size:11.2px;color:#374151">"amd64"</div></div>
<div class="a" style="left:489px;top:977px;width:697px;height:1px;background:#eceef2;"></div>
<div class="t" style="left:495.00px;top:989.81px;font-size:11.4px;-webkit-text-stroke:0.35px currentColor;color:#263042;">host.cpu.cache.l2.size</div>
<div class="a" style="left:811.8px;top:0;width:373.20000000000005px;height:1036px;overflow:hidden"><div class="t" style="left:0;top:987.97px;font-size:11.2px;color:#374151">12288</div></div>
<div class="a" style="left:489px;top:1014px;width:697px;height:1px;background:#eceef2;"></div>
<div class="t" style="left:495.00px;top:1025.61px;font-size:11.4px;-webkit-text-stroke:0.35px currentColor;color:#263042;">host.cpu.family</div>
<div class="a" style="left:811.8px;top:0;width:373.20000000000005px;height:1036px;overflow:hidden"><div class="t" style="left:0;top:1023.97px;font-size:11.2px;color:#374151">6</div></div>
<div class="a" style="left:1197px;top:530px;width:702px;height:506px;background:#fff;border:1px solid #eceef2;border-bottom:none;box-sizing:border-box;"></div>
<div class="a" style="left:1198px;top:531px;width:700px;height:26px;background:#f7f8fb;"></div>
<div class="a" style="left:1198px;top:557px;width:700px;height:1px;background:#e6e8ec;"></div>
<div class="a" style="left:1545px;top:535px;width:1px;height:18px;background:#e6e8ec;"></div>
<div class="a" style="left:1893px;top:531px;width:1px;height:26px;background:#eceef2;"></div>
<div class="t" style="left:1204.00px;top:538.12px;font-size:9.5px;-webkit-text-stroke:0.35px currentColor;color:#374151;">Field</div>
<div class="t" style="left:1552.00px;top:538.12px;font-size:9.5px;-webkit-text-stroke:0.35px currentColor;color:#374151;">Value</div>
<div class="t" style="left:1204.00px;top:570.11px;font-size:11.4px;-webkit-text-stroke:0.35px currentColor;color:#263042;">host.cpu.model.id</div>
<div class="a" style="left:1552.8px;top:0;width:340.20000000000005px;height:1036px;overflow:hidden"><div class="t" style="left:0;top:567.97px;font-size:11.2px;color:#374151">186</div></div>
<div class="a" style="left:1198px;top:594px;width:696px;height:1px;background:#eceef2;"></div>
<div class="t" style="left:1204.00px;top:605.91px;font-size:11.4px;-webkit-text-stroke:0.35px currentColor;color:#263042;">host.cpu.model.name</div>
<div class="a" style="left:1552.8px;top:0;width:340.20000000000005px;height:1036px;overflow:hidden"><div class="t" style="left:0;top:604.17px;font-size:11.2px;color:#374151">"13th Gen Intel(R) Core(TM) i7-1355U"</div></div>
<div class="a" style="left:1198px;top:630px;width:696px;height:1px;background:#eceef2;"></div>
<div class="t" style="left:1204.00px;top:642.91px;font-size:11.4px;-webkit-text-stroke:0.35px currentColor;color:#263042;">host.cpu.stepping</div>
<div class="a" style="left:1552.8px;top:0;width:340.20000000000005px;height:1036px;overflow:hidden"><div class="t" style="left:0;top:639.97px;font-size:11.2px;color:#374151">3</div></div>
<div class="a" style="left:1198px;top:666px;width:696px;height:1px;background:#eceef2;"></div>
<div class="t" style="left:1204.00px;top:679.11px;font-size:11.4px;-webkit-text-stroke:0.35px currentColor;color:#263042;">host.cpu.vendor.id</div>
<div class="a" style="left:1552.8px;top:0;width:340.20000000000005px;height:1036px;overflow:hidden"><div class="t" style="left:0;top:677.27px;font-size:11.2px;color:#374151">"GenuineIntel"</div></div>
<div class="a" style="left:1198px;top:703px;width:696px;height:1px;background:#eceef2;"></div>
<div class="t" style="left:1204.00px;top:714.91px;font-size:11.4px;-webkit-text-stroke:0.35px currentColor;color:#263042;">host.id</div>
<div class="a" style="left:1552.8px;top:0;width:340.20000000000005px;height:1036px;overflow:hidden"><div class="t" style="left:0;top:712.97px;font-size:11.2px;color:#374151">"mahendra-Latitude-3540"</div></div>
<div class="a" style="left:1198px;top:739px;width:696px;height:1px;background:#eceef2;"></div>
<div class="t" style="left:1204.00px;top:813.91px;font-size:11.4px;-webkit-text-stroke:0.35px currentColor;color:#263042;">host.ip</div>
<div class="a" style="left:1552.8px;top:0;width:340.20000000000005px;height:1036px;overflow:hidden"><div class="t" style="left:0;top:749.97px;font-size:11.2px;color:#374151">["Interface: wlp0s20f3, IP: 192.168.0.220","Interface:</div><div class="t" style="left:0;top:762.78px;font-size:11.2px;color:#374151">wlp0s20f3, IP: fe80::80a2:7104:db30:fa3b","Interface: br-</div><div class="t" style="left:0;top:775.59px;font-size:11.2px;color:#374151">212a996cecc0, IP: 192.168.49.1","Interface: br-212a996cecc0,</div><div class="t" style="left:0;top:788.40px;font-size:11.2px;color:#374151">IP: fe80::4ccc:9eff:fee1:91b0","Interface: br-51bd3eb65e4a,</div><div class="t" style="left:0;top:801.21px;font-size:11.2px;color:#374151">IP: 172.19.0.1","Interface: br-6fa59d9a112a, IP:</div><div class="t" style="left:0;top:814.02px;font-size:11.2px;color:#374151">172.18.0.1","Interface: br-6fa59d9a112a, IP:</div><div class="t" style="left:0;top:826.83px;font-size:11.2px;color:#374151">fe80::3c45:1eff:fe7e:8ea4","Interface: docker0, IP:</div><div class="t" style="left:0;top:839.64px;font-size:11.2px;color:#374151">172.17.0.1","Interface: veth130f512, IP:</div><div class="t" style="left:0;top:852.45px;font-size:11.2px;color:#374151">fe80::582c:ebff:fee8:82ec","Interface: veth4cf5397, IP:</div><div class="t" style="left:0;top:865.26px;font-size:11.2px;color:#374151">fe80::a897:49ff:fe8d:3f75","Interface: veth8a143d8, IP:</div><div class="t" style="left:0;top:878.07px;font-size:11.2px;color:#374151">fe80::f8d3:d1ff:feb8:4bad"]</div></div>
<div class="a" style="left:1198px;top:900px;width:696px;height:1px;background:#eceef2;"></div>
<div class="t" style="left:1204.00px;top:961.81px;font-size:11.4px;-webkit-text-stroke:0.35px currentColor;color:#263042;">host.mac</div>
<div class="a" style="left:1552.8px;top:0;width:340.20000000000005px;height:1036px;overflow:hidden"><div class="t" style="left:0;top:910.87px;font-size:11.2px;color:#374151">["Interface: enp1s0, MAC: 28-00-AF-CB-40-8A","Interface:</div><div class="t" style="left:0;top:923.65px;font-size:11.2px;color:#374151">wlp0s20f3, MAC: 6C-F6-DA-90-D9-E0","Interface: br-</div><div class="t" style="left:0;top:936.43px;font-size:11.2px;color:#374151">212a996cecc0, MAC: 4E-CC-9E-E1-91-B0","Interface: br-</div><div class="t" style="left:0;top:949.21px;font-size:11.2px;color:#374151">51bd3eb65e4a, MAC: A6-7B-23-76-64-9B","Interface: br-</div><div class="t" style="left:0;top:961.99px;font-size:11.2px;color:#374151">6fa59d9a112a, MAC: 3E-45-1E-7E-8E-A4","Interface:</div><div class="t" style="left:0;top:974.77px;font-size:11.2px;color:#374151">docker0, MAC: 9E-AB-6C-C2-FD-89","Interface: veth130f512,</div><div class="t" style="left:0;top:987.55px;font-size:11.2px;color:#374151">MAC: 5A-2C-EB-E8-82-EC","Interface: veth4cf5397, MAC: AA-</div><div class="t" style="left:0;top:1000.33px;font-size:11.2px;color:#374151">97-49-8D-3F-75","Interface: veth8a143d8, MAC: FA-D3-D1-</div><div class="t" style="left:0;top:1013.11px;font-size:11.2px;color:#374151">B8-4B-AD"]</div></div>
<div class="a" style="left:1198px;top:1035px;width:696px;height:1px;background:#eceef2;"></div>
<div class="a" style="left:0px;top:0px;width:1910px;height:84px;background:#2c2c2c;"></div>
<div class="a" style="left:0px;top:0px;width:1910px;height:2px;background:#262626;"></div>
<div class="a" style="left:2px;top:2px;width:696px;height:1px;background:#585858;"></div>
<div class="a" style="left:746px;top:2px;width:1164px;height:1px;background:#585858;"></div>
<div class="a" style="left:694px;top:0px;width:6px;height:3px;border-bottom:1px solid #585858;border-right:1px solid #585858;border-bottom-right-radius:5px;box-sizing:border-box;"></div>
<div class="a" style="left:744px;top:0px;width:6px;height:3px;border-bottom:1px solid #585858;border-left:1px solid #585858;border-bottom-left-radius:5px;box-sizing:border-box;"></div>
<svg class="a" style="left:10px;top:17px;" width="18" height="18" viewBox="0 0 18 18" fill="none"><path d="M15 9H4M9 3.5L3.5 9 9 14.5" stroke="#8a8a8a" stroke-width="1.6" stroke-linecap="round" stroke-linejoin="round"/></svg>
<svg class="a" style="left:46px;top:17px;" width="18" height="18" viewBox="0 0 18 18" fill="none"><path d="M3 9h11M9 3.5L14.5 9 9 14.5" stroke="#8a8a8a" stroke-width="1.6" stroke-linecap="round" stroke-linejoin="round"/></svg>
<svg class="a" style="left:81px;top:17px;" width="18" height="18" viewBox="0 0 18 18" fill="none"><path d="M14.2 9.5A5.3 5.3 0 1 1 12.6 5" stroke="#e8e8e8" stroke-width="1.7" stroke-linecap="round"/><path d="M14.8 2.6v4.6h-4.6z" fill="#e8e8e8"/></svg>
<svg class="a" style="left:117px;top:17px;" width="18" height="18" viewBox="0 0 18 18" fill="none"><path d="M3 8.2L9 3l6 5.2V15.5h-4v-4.2H7v4.2H3z" stroke="#e8e8e8" stroke-width="1.6" stroke-linejoin="round"/></svg>
<div class="a" style="left:152px;top:9px;width:1388px;height:34px;background:#272727;border-radius:17px;"></div>
<div class="a" style="left:157px;top:14px;width:24px;height:24px;background:#2f2f2f;border-radius:12px;"></div>
<svg class="a" style="left:161px;top:19px;" width="16" height="14" viewBox="0 0 16 14" fill="none"><circle cx="4" cy="3.5" r="2" stroke="#e8e8e8" stroke-width="1.4"/><path d="M8 3.5h6.5M1.5 10.5H8" stroke="#e8e8e8" stroke-width="1.4" stroke-linecap="round"/><circle cx="12" cy="10.5" r="2" stroke="#e8e8e8" stroke-width="1.4"/></svg>
<div class="t url" style="left:189.4px;top:14.89px;font-size:14.6px;line-height:22px;width:1268px;overflow:hidden;text-overflow:ellipsis;color:#9a9a9a"><span style="color:#ececec">tahqh.middleware.io</span>/logs?live=true&amp;from_ts=1758815366000&amp;to_ts=1758816266000&amp;range=15m&amp;trail=false&amp;filter=eyJzZXJ2aWNlLm5hbWUiOnsidmFsdWVzIjpbInVua25vd25fc2VydmljZSJdLCJvcGVyYXRvciI6IklOIn19</div>
<svg class="a" style="left:1476px;top:17px;" width="18" height="18" viewBox="0 0 18 18" fill="none"><circle cx="7.5" cy="7.5" r="5" stroke="#e8e8e8" stroke-width="1.6"/><path d="M11.3 11.3L16 16M5 7.5h5" stroke="#e8e8e8" stroke-width="1.6" stroke-linecap="round"/></svg>
<svg class="a" style="left:1508px;top:16px;" width="19" height="19" viewBox="0 0 19 19" fill="none"><path d="M9.5 2.3l2.1 4.6 5 .5-3.8 3.3 1.1 4.9-4.4-2.6-4.4 2.6 1.1-4.9L2.4 7.4l5-.5z" stroke="#e8e8e8" stroke-width="1.5" stroke-linejoin="round"/></svg>
<svg class="a" style="left:1559px;top:18px;" width="16" height="16" viewBox="0 0 16 16" fill="none"><rect width="16" height="16" fill="#00c0f5"/><path d="M4.2 4l8.2 4.2M4.5 9.2l4 2.1M4.6 9.2v4" stroke="#0a0a0a" stroke-width="2.1" stroke-linecap="round"/></svg>
<svg class="a" style="left:1595px;top:18px;" width="16" height="16" viewBox="0 0 16 16" fill="none"><rect width="16" height="16" rx="1.5" fill="#5d5fcb"/><path d="M4.3 5.2L1.8 8l2.5 2.8M11.7 5.2L14.2 8l-2.5 2.8M5 7l1.3 2.4L8 6.8l1.7 2.6L11 7" stroke="#f0f0ff" stroke-width="1.1" stroke-linecap="round" stroke-linejoin="round"/></svg>
<svg class="a" style="left:1630px;top:17px;" width="17" height="17" viewBox="0 0 17 17" fill="none"><circle cx="8.7" cy="8.9" r="7.8" fill="#dfe6ea"/><path d="M.9 8.9a7.8 7.8 0 0 1 15.6 0z" fill="#e5121e"/><circle cx="8.7" cy="8.9" r="1.9" fill="#a9b0b5"/></svg>
<svg class="a" style="left:1666px;top:17px;" width="18" height="18" viewBox="0 0 18 18" fill="none"><circle cx="8.8" cy="8.9" r="7.6" stroke="#e5242c" stroke-width="1"/><circle cx="8.8" cy="8.9" r="5.4" fill="#ef2229"/></svg>
<svg class="a" style="left:1702px;top:16px;" width="20" height="19" viewBox="0 0 20 19" fill="none"><path d="M2.5 4.8h3.6a2.2 2.2 0 0 1 4.3 0h3.4v3.6a1.9 1.9 0 0 1 0 3.7v4.3H2.5v-3.6a2 2 0 0 0 0-4z" stroke="#e8e8e8" stroke-width="1.6" stroke-linejoin="round"/></svg>
<div class="a" style="left:1738px;top:17px;width:1px;height:18px;background:#4a4a4a;"></div>
<svg class="a" style="left:1755px;top:17px;" width="20" height="18" viewBox="0 0 20 18" fill="none"><path d="M2 4h10M2 8h10M2 12h6" stroke="#e8e8e8" stroke-width="1.6" stroke-linecap="round"/><path d="M15 3v9" stroke="#e8e8e8" stroke-width="1.6"/><circle cx="13.2" cy="12.5" r="2.2" fill="#e8e8e8"/><path d="M15 3l3 1" stroke="#e8e8e8" stroke-width="1.6" stroke-linecap="round"/></svg>
<div class="a" style="left:1787px;top:9px;width:85px;height:34px;background:#202020;border-radius:17px;"></div>
<div class="a" style="left:1797px;top:16px;width:20px;height:20px;background:#1a7fd4;border-radius:10px;"></div>
<div class="t" style="left:1801.50px;top:20.38px;font-size:12.5px;color:#ffffff;">M</div>
<div class="t" style="left:1823.00px;top:18.33px;font-size:15.5px;color:#ececec;">Work</div>
<svg class="a" style="left:1888px;top:17px;" width="12" height="18" viewBox="0 0 12 18" fill="none"><circle cx="6" cy="3.5" r="1.6" fill="#e8e8e8"/><circle cx="6" cy="9" r="1.6" fill="#e8e8e8"/><circle cx="6" cy="14.5" r="1.6" fill="#e8e8e8"/></svg>
<svg class="a" style="left:9px;top:56px;" width="14" height="14" viewBox="0 0 14 14" fill="none"><rect x="0" y="0" width="3.4" height="3.4" fill="#ea4335"/><rect x="5" y="0" width="3.4" height="3.4" fill="#ea4335"/><rect x="10" y="0" width="3.4" height="3.4" fill="#ea4335"/><rect x="0" y="5" width="3.4" height="3.4" fill="#34a853"/><rect x="5" y="5" width="3.4" height="3.4" fill="#4285f4"/><rect x="10" y="5" width="3.4" height="3.4" fill="#fbbc04"/><rect x="0" y="10" width="3.4" height="3.4" fill="#34a853"/><rect x="5" y="10" width="3.4" height="3.4" fill="#fbbc04"/><rect x="10" y="10" width="3.4" height="3.4" fill="#fbbc04"/></svg>
<div class="t" style="left:30.20px;top:56.19px;font-size:14.6px;color:#e3e3e3;">Apps</div>
<svg class="a" style="left:82px;top:56px;" width="15" height="15" viewBox="0 0 15 15" fill="none"><rect x="1" y="1" width="5" height="5" stroke="#e8e8e8" stroke-width="1.5"/><rect x="9" y="1" width="5" height="5" stroke="#e8e8e8" stroke-width="1.5"/><rect x="1" y="9" width="5" height="5" stroke="#e8e8e8" stroke-width="1.5"/><rect x="9" y="9" width="5" height="5" stroke="#e8e8e8" stroke-width="1.5"/></svg>
<div class="a" style="left:111px;top:54px;width:1px;height:17px;background:#3f3f3f;"></div>
<svg class="a" style="left:128px;top:56px;" width="17" height="14" viewBox="0 0 17 14" fill="none"><path d="M1.2 2.2a1 1 0 0 1 1-1h4l1.8 2h6.8a1 1 0 0 1 1 1v7.6a1 1 0 0 1-1 1H2.2a1 1 0 0 1-1-1z" stroke="#e8e8e8" stroke-width="1.4" stroke-linejoin="round"/></svg>
<div class="t" style="left:156.00px;top:55.15px;font-size:17px;font-weight:700;color:#1fa83f;">$</div>
<svg class="a" style="left:189px;top:56px;" width="17" height="14" viewBox="0 0 17 14" fill="none"><path d="M1.2 2.2a1 1 0 0 1 1-1h4l1.8 2h6.8a1 1 0 0 1 1 1v7.6a1 1 0 0 1-1 1H2.2a1 1 0 0 1-1-1z" stroke="#e8e8e8" stroke-width="1.4" stroke-linejoin="round"/></svg>
<div class="t" style="left:213.80px;top:55.85px;font-size:15px;font-weight:700;color:#e8e8e8;font-family:'Liberation Serif',serif;font-style:italic;">M</div>
<div class="t" style="left:227.00px;top:56.19px;font-size:14.6px;color:#e3e3e3;">W-DashBoa…</div>
<svg class="a" style="left:343px;top:56px;" width="17" height="14" viewBox="0 0 17 14" fill="none"><path d="M1.2 2.2a1 1 0 0 1 1-1h4l1.8 2h6.8a1 1 0 0 1 1 1v7.6a1 1 0 0 1-1 1H2.2a1 1 0 0 1-1-1z" stroke="#e8e8e8" stroke-width="1.4" stroke-linejoin="round"/></svg>
<div class="t" style="left:368.00px;top:55.35px;font-size:15px;">📌</div>
<div class="t" style="left:387.00px;top:56.19px;font-size:14.6px;color:#e3e3e3;">ENG ticket</div>
<svg class="a" style="left:476px;top:56px;" width="17" height="14" viewBox="0 0 17 14" fill="none"><path d="M1.2 2.2a1 1 0 0 1 1-1h4l1.8 2h6.8a1 1 0 0 1 1 1v7.6a1 1 0 0 1-1 1H2.2a1 1 0 0 1-1-1z" stroke="#e8e8e8" stroke-width="1.4" stroke-linejoin="round"/></svg>
<div class="t" style="left:501.00px;top:56.19px;font-size:14.6px;color:#e3e3e3;">MW-GITHUB</div>
<svg class="a" style="left:607px;top:56px;" width="17" height="14" viewBox="0 0 17 14" fill="none"><path d="M1.2 2.2a1 1 0 0 1 1-1h4l1.8 2h6.8a1 1 0 0 1 1 1v7.6a1 1 0 0 1-1 1H2.2a1 1 0 0 1-1-1z" stroke="#e8e8e8" stroke-width="1.4" stroke-linejoin="round"/></svg>
<div class="t" style="left:633.00px;top:55.35px;font-size:15px;">📌</div>
<div class="t" style="left:650.80px;top:56.19px;font-size:14.6px;color:#e3e3e3;">MW-Kube…</div>
<svg class="a" style="left:759px;top:57px;" width="18" height="11" viewBox="0 0 18 11" fill="none"><path d="M3 1h7l-3 9H0z" fill="#e5484d"/><path d="M10 1h8l-3 9H7z" fill="#3aa0ff"/></svg>
<div class="t" style="left:782.50px;top:56.19px;font-size:14.6px;color:#e3e3e3;">MyFile — Eraser</div>
<svg class="a" style="left:909px;top:55px;" width="15" height="15" viewBox="0 0 15 15" fill="none"><path d="M1 3l12-2.5v3L1 6z" fill="#2f9cf4"/><path d="M3 8l9-2v3L3 11z" fill="#2f9cf4"/><path d="M3 12l3-1v3.5z" fill="#2f9cf4"/></svg>
<div class="t" style="left:930.60px;top:56.19px;font-size:14.6px;color:#e3e3e3;">Fathom Team…</div>
<div class="a" style="left:1062px;top:55px;width:16px;height:16px;background:#111;border-radius:2px;"></div>
<div class="t" style="left:1064.50px;top:57.65px;font-size:11px;color:#fff;font-style:italic;">M</div>
<div class="t" style="left:1084.80px;top:56.19px;font-size:14.6px;color:#e3e3e3;">MDN Web Docs</div>
<svg class="a" style="left:1208px;top:56px;" width="17" height="14" viewBox="0 0 17 14" fill="none"><path d="M1.2 2.2a1 1 0 0 1 1-1h4l1.8 2h6.8a1 1 0 0 1 1 1v7.6a1 1 0 0 1-1 1H2.2a1 1 0 0 1-1-1z" stroke="#e8e8e8" stroke-width="1.4" stroke-linejoin="round"/></svg>
<div class="t" style="left:1233.00px;top:55.35px;font-size:15px;">📌</div>
<div class="t" style="left:1250.00px;top:56.19px;font-size:14.6px;color:#e3e3e3;">NPM</div>
<div class="t" style="left:1283.00px;top:55.35px;font-size:15px;">📌</div>
<svg class="a" style="left:1321px;top:56px;" width="17" height="14" viewBox="0 0 17 14" fill="none"><path d="M1.2 2.2a1 1 0 0 1 1-1h4l1.8 2h6.8a1 1 0 0 1 1 1v7.6a1 1 0 0 1-1 1H2.2a1 1 0 0 1-1-1z" stroke="#e8e8e8" stroke-width="1.4" stroke-linejoin="round"/></svg>
<div class="t" style="left:1345.40px;top:56.19px;font-size:14.6px;color:#e3e3e3;">My MW LEARN</div>
<div class="a" style="left:1763px;top:54px;width:1px;height:17px;background:#3f3f3f;"></div>
<svg class="a" style="left:1780px;top:56px;" width="17" height="14" viewBox="0 0 17 14" fill="none"><path d="M1.2 2.2a1 1 0 0 1 1-1h4l1.8 2h6.8a1 1 0 0 1 1 1v7.6a1 1 0 0 1-1 1H2.2a1 1 0 0 1-1-1z" stroke="#e8e8e8" stroke-width="1.4" stroke-linejoin="round"/></svg>
<div class="t" style="left:1804.50px;top:56.19px;font-size:14.6px;color:#e3e3e3;">All Bookmarks</div></body></html>
